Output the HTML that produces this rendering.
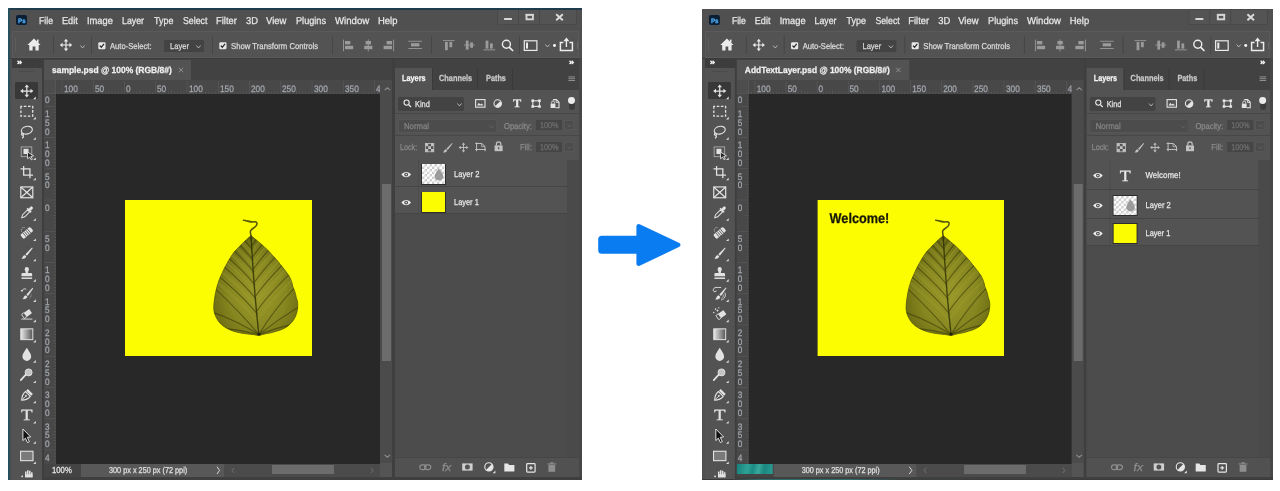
<!DOCTYPE html><html lang="en"><head><meta charset="utf-8"><title>Add text layer - before and after</title><style>
html,body{margin:0;padding:0}
body{width:1280px;height:491px;background:#fff;position:relative;overflow:hidden;font-family:"Liberation Sans",sans-serif;text-rendering:geometricPrecision}
.r,.t,.i,.clip,.win,.in{position:absolute}
.r{left:0;top:0}
.t{white-space:nowrap;transform-origin:0 50%;display:block;-webkit-text-stroke:0.25px currentColor}
.ff-s{font-family:"Liberation Serif",serif}
.i{display:block;overflow:visible}
.clip,.win{overflow:hidden}
.in{left:0;top:0;width:600px;height:491px;filter:blur(0.4px)}

</style></head><body>
<div class="win" style="left:8px;top:8px;width:574px;height:471.6px"><div class="in" style="left:-8px;top:-8px">
<div class="r" style="left:0px;top:0px;width:600px;height:491px;background:#505050;"></div><div class="r" style="left:16px;top:15px;width:11.4px;height:9.9px;background:#0a1f33;border-radius:2px;"></div><span class="t" style="left:17.9px;top:14px;font-size:6.4px;line-height:16px;color:#52acf6;font-weight:bold;transform:scaleX(0.971);">Ps</span><span class="t" style="left:39px;top:14px;font-size:10px;line-height:16px;color:#e8e8e8;transform:scaleX(0.869);">File</span><span class="t" style="left:62.3px;top:14px;font-size:10px;line-height:16px;color:#e8e8e8;transform:scaleX(0.911);">Edit</span><span class="t" style="left:87.3px;top:14px;font-size:10px;line-height:16px;color:#e8e8e8;transform:scaleX(0.932);">Image</span><span class="t" style="left:122.3px;top:14px;font-size:10px;line-height:16px;color:#e8e8e8;transform:scaleX(0.879);">Layer</span><span class="t" style="left:153.6px;top:14px;font-size:10px;line-height:16px;color:#e8e8e8;transform:scaleX(0.895);">Type</span><span class="t" style="left:182.6px;top:14px;font-size:10px;line-height:16px;color:#e8e8e8;transform:scaleX(0.878);">Select</span><span class="t" style="left:216px;top:14px;font-size:10px;line-height:16px;color:#e8e8e8;transform:scaleX(0.936);">Filter</span><span class="t" style="left:245.8px;top:14px;font-size:10px;line-height:16px;color:#e8e8e8;transform:scaleX(0.939);">3D</span><span class="t" style="left:266.4px;top:14px;font-size:10px;line-height:16px;color:#e8e8e8;transform:scaleX(0.949);">View</span><span class="t" style="left:295.8px;top:14px;font-size:10px;line-height:16px;color:#e8e8e8;transform:scaleX(0.915);">Plugins</span><span class="t" style="left:334.8px;top:14px;font-size:10px;line-height:16px;color:#e8e8e8;transform:scaleX(0.962);">Window</span><span class="t" style="left:378.4px;top:14px;font-size:10px;line-height:16px;color:#e8e8e8;transform:scaleX(0.943);">Help</span><div class="r" style="left:497.8px;top:9.6px;width:77.8px;height:14.2px;background:#545454;box-shadow:0 0 0 0.8px #494949;"></div><div class="r" style="left:518.4px;top:9.6px;width:0.9px;height:14.2px;background:#494949;"></div><div class="r" style="left:539.4px;top:9.6px;width:0.9px;height:14.2px;background:#494949;"></div><div class="r" style="left:503.6px;top:17.6px;width:8.4px;height:2.5px;background:#d6d6d6;border-radius:0.6px;"></div><svg class="i" style="left:523px;top:11px;" width="14" height="12" viewBox="0 0 14 12"><rect x="3.5" y="3.9" width="6.4" height="4.4" fill="none" stroke="#d6d6d6" stroke-width="1.9"/><rect x="2.55" y="2.9" width="8.3" height="1.4" fill="#d6d6d6"/></svg><svg class="i" style="left:553px;top:11px;" width="14" height="12" viewBox="0 0 14 12"><path d="M3.2 3.2L9.8 9.2M9.8 3.2L3.2 9.2" stroke="#dcdcdc" stroke-width="1.9"/></svg><div class="r" style="left:12px;top:31px;width:567.2px;height:26.6px;background:#535353;box-shadow:inset 0 0 0 0.8px #5d5d5d;"></div><div class="r" style="left:8px;top:57.6px;width:592px;height:1.4px;background:#3c3c3c;"></div><div class="r" style="left:14.6px;top:38px;width:1px;height:14px;background:#5e5e5e;"></div><div class="r" style="left:52.5px;top:36px;width:1px;height:18px;background:#464646;"></div><div class="r" style="left:90.9px;top:36px;width:1px;height:18px;background:#464646;"></div><div class="r" style="left:211.7px;top:36px;width:1px;height:18px;background:#464646;"></div><div class="r" style="left:331.5px;top:36px;width:1px;height:18px;background:#464646;"></div><div class="r" style="left:431.1px;top:36px;width:1px;height:18px;background:#464646;"></div><div class="r" style="left:519.1px;top:36px;width:1px;height:18px;background:#464646;"></div><svg class="i" style="left:26px;top:37px;" width="16" height="16" viewBox="0 0 16 16"><path d="M8 1.6L1.4 8H3.3V13.6H6.6V9.6H9.4V13.6H12.7V8H14.6z" fill="#ececec"/><rect x="11" y="2.6" width="1.6" height="3" fill="#ececec"/></svg><svg class="i" style="left:58px;top:37px;" width="16" height="16" viewBox="0 0 16 16"><g transform="translate(8 8) scale(0.93)"><g fill="none" stroke="#ececec" stroke-width="1.25"><path d="M0-4.2V4.2M-4.2 0H4.2"/></g><g fill="#ececec"><path d="M0-6.6L2.3-3.7H-2.3z"/><path d="M0 6.6L2.3 3.7H-2.3z"/><path d="M-6.6 0L-3.7-2.3V2.3z"/><path d="M6.6 0L3.7-2.3V2.3z"/></g></g></svg><svg class="i" style="left:80px;top:44.5px;" width="5" height="3.6" viewBox="0 0 5 3.6"><path d="M0.4 0.5L2.5 3L4.6 0.5" fill="none" stroke="#bdbdbd" stroke-width="0.9"/></svg><svg class="i" style="left:98.2px;top:41.6px;" width="8" height="8" viewBox="0 0 8 8"><rect x="0.3" y="0.3" width="7.2" height="7" rx="1.2" fill="#e8e8e8"/><path d="M1.8 3.6L3.3 5.3L6 1.9" fill="none" stroke="#2a2a2a" stroke-width="1.3"/></svg><span class="t" style="left:110.2px;top:38px;font-size:8.6px;line-height:16px;color:#dadada;transform:scaleX(0.888);">Auto-Select:</span><div class="r" style="left:164px;top:40px;width:40px;height:12.2px;background:#434343;border-radius:1.5px;"></div><span class="t" style="left:169.7px;top:38px;font-size:8.6px;line-height:16px;color:#dadada;transform:scaleX(0.879);">Layer</span><svg class="i" style="left:196.4px;top:44.8px;" width="5" height="3.6" viewBox="0 0 5 3.6"><path d="M0.4 0.5L2.5 3L4.6 0.5" fill="none" stroke="#bdbdbd" stroke-width="0.9"/></svg><svg class="i" style="left:219.4px;top:41.6px;" width="8" height="8" viewBox="0 0 8 8"><rect x="0.3" y="0.3" width="7.2" height="7" rx="1.2" fill="#e8e8e8"/><path d="M1.8 3.6L3.3 5.3L6 1.9" fill="none" stroke="#2a2a2a" stroke-width="1.3"/></svg><span class="t" style="left:231.2px;top:38px;font-size:8.6px;line-height:16px;color:#dadada;transform:scaleX(0.899);">Show Transform Controls</span><svg class="i" style="left:342px;top:39px;" width="13" height="13" viewBox="0 0 13 13"><rect x="1" y="0.6" width="0.9" height="11.6" fill="#9b9b9b"/><rect x="3" y="2" width="5.4" height="3.4" fill="#9b9b9b"/><rect x="3" y="6.8" width="8.2" height="3.4" fill="#9b9b9b"/></svg><svg class="i" style="left:362px;top:39px;" width="13" height="13" viewBox="0 0 13 13"><rect x="5.8" y="0.4" width="0.9" height="12" fill="#9b9b9b"/><rect x="3.6" y="2" width="5.4" height="3.4" fill="#9b9b9b"/><rect x="2.2" y="6.8" width="8.2" height="3.4" fill="#9b9b9b"/></svg><svg class="i" style="left:382px;top:39px;" width="13" height="13" viewBox="0 0 13 13"><rect x="11.2" y="0.6" width="0.9" height="11.6" fill="#9b9b9b"/><rect x="4.6" y="2" width="5.4" height="3.4" fill="#9b9b9b"/><rect x="1.6" y="6.8" width="8.4" height="3.4" fill="#9b9b9b"/></svg><svg class="i" style="left:408px;top:39px;" width="15" height="13" viewBox="0 0 15 13"><rect x="0.4" y="1.8" width="13.6" height="0.9" fill="#9b9b9b"/><rect x="0.4" y="9" width="13.6" height="0.9" fill="#9b9b9b"/><rect x="3" y="4.2" width="8.4" height="3.2" fill="#9b9b9b"/></svg><svg class="i" style="left:442px;top:39px;" width="14" height="13" viewBox="0 0 14 13"><rect x="1" y="1.2" width="11.6" height="0.9" fill="#9b9b9b"/><rect x="3" y="3" width="2.8" height="8.2" fill="#9b9b9b"/><rect x="7.4" y="3" width="2.8" height="5.2" fill="#9b9b9b"/></svg><svg class="i" style="left:463px;top:39px;" width="13" height="13" viewBox="0 0 13 13"><rect x="0.8" y="5.6" width="11" height="0.9" fill="#9b9b9b"/><rect x="2.8" y="1.6" width="2.8" height="9" fill="#9b9b9b"/><rect x="7.2" y="3.4" width="2.8" height="5.4" fill="#9b9b9b"/></svg><svg class="i" style="left:482px;top:39px;" width="14" height="13" viewBox="0 0 14 13"><rect x="1.4" y="10.4" width="11.8" height="0.9" fill="#9b9b9b"/><rect x="3.6" y="1.6" width="2.8" height="8" fill="#9b9b9b"/><rect x="8" y="4.4" width="2.8" height="5.2" fill="#9b9b9b"/></svg><svg class="i" style="left:500px;top:38px;" width="15" height="15" viewBox="0 0 15 15"><circle cx="6.4" cy="6.2" r="4" fill="none" stroke="#ececec" stroke-width="1.4"/><path d="M9.4 9.3L12.6 12.5" stroke="#ececec" stroke-width="1.7" stroke-linecap="round"/></svg><svg class="i" style="left:523px;top:39px;" width="16" height="13" viewBox="0 0 16 13"><rect x="1.3" y="1.8" width="12.6" height="9.6" fill="none" stroke="#ececec" stroke-width="1.2"/><rect x="3" y="3.6" width="2" height="6" fill="#ececec"/></svg><svg class="i" style="left:545px;top:44.4px;" width="5" height="3.6" viewBox="0 0 5 3.6"><path d="M0.4 0.5L2.5 3L4.6 0.5" fill="none" stroke="#bdbdbd" stroke-width="0.9"/></svg><div class="r" style="left:552.9px;top:44.3px;width:2.9px;height:2.9px;background:#f4f4f4;border-radius:50%;"></div><svg class="i" style="left:558px;top:37px;" width="17" height="15" viewBox="0 0 17 15"><path d="M5.4 5.6H2.4V13.4H14.4V5.6H11.4" fill="none" stroke="#ececec" stroke-width="1.5"/><path d="M8.4 10V2.4" stroke="#ececec" stroke-width="1.4"/><path d="M8.4 0.6L11.4 4.2H5.4z" fill="#ececec"/></svg><div class="r" style="left:576.6px;top:42px;width:1px;height:7px;background:#6a6a6a;"></div><div class="r" style="left:12px;top:59px;width:30px;height:9px;background:#3d3d3d;"></div><svg class="i" style="left:16.8px;top:60.2px;" width="6" height="6" viewBox="0 0 6 6"><path d="M0.5 0.8L2.1 2.4L0.5 4M2.7 0.8L4.3 2.4L2.7 4" fill="none" stroke="#f4f4f4" stroke-width="1.35"/></svg><div class="r" style="left:12px;top:68px;width:30px;height:412px;background:#535353;"></div><div class="r" style="left:19px;top:71px;width:15px;height:1.4px;background:#4a4a4a;"></div><div class="r" style="left:42px;top:59px;width:2px;height:421px;background:#3e3e3e;"></div><div class="r" style="left:15.3px;top:82px;width:23px;height:17.2px;background:#383838;border-radius:1.5px;"></div><svg class="i" style="left:12px;top:80px;" width="30" height="400" viewBox="12 80 30 400"><defs><linearGradient id="ggL" x1="0" x2="1"><stop offset="0" stop-color="#e8e8e8"/><stop offset="1" stop-color="#555"/></linearGradient></defs><g transform="translate(26.8 91) scale(1)"><g fill="none" stroke="#e2e2e2" stroke-width="1.25"><path d="M0-4.2V4.2M-4.2 0H4.2"/></g><g fill="#e2e2e2"><path d="M0-6.6L2.3-3.7H-2.3z"/><path d="M0 6.6L2.3 3.7H-2.3z"/><path d="M-6.6 0L-3.7-2.3V2.3z"/><path d="M6.6 0L3.7-2.3V2.3z"/></g></g><path d="M35.8 96.6v2.6h-2.6z" fill="#e2e2e2"/><g transform="translate(26.8 111.27) scale(1)"><rect x="-5.9" y="-4.9" width="11.8" height="9.8" fill="none" stroke="#e2e2e2" stroke-width="1.3" stroke-dasharray="2.6 1.6" stroke-dashoffset="1.3"/></g><path d="M35.8 116.87v2.6h-2.6z" fill="#e2e2e2"/><g transform="translate(26.8 131.54) scale(0.95)"><g fill="none" stroke="#e2e2e2" stroke-width="1.2"><ellipse cx="0.4" cy="-1.4" rx="5.9" ry="4" transform="rotate(-14)"/><path d="M-4.4 1.2c-1.6 0.6-1.6 2.6 0 2.6c1.2 0 1.2-1.6 0.2-1.4M-3.9 3.6c0.6 1.2 0.2 2.6-1 3.4"/></g></g><path d="M35.8 137.14v2.6h-2.6z" fill="#e2e2e2"/><g transform="translate(26.8 151.81) scale(1)"><rect x="-5.6" y="-4.9" width="10.6" height="9.8" fill="none" stroke="#b4b4b4" stroke-width="0.8"/><rect x="-3.3" y="-3" width="5" height="5.2" fill="#e2e2e2"/><path d="M0.6 0.2L6.8 4L4 4.6L5.6 7.4L4.4 8L2.8 5.2L0.9 7z" fill="#222" stroke="#e2e2e2" stroke-width="0.9"/></g><path d="M35.8 157.41v2.6h-2.6z" fill="#e2e2e2"/><g transform="translate(26.8 172.08) scale(0.95)"><g fill="none" stroke="#e2e2e2" stroke-width="1.35"><path d="M-3.3-6.4V3.3H6.6"/><path d="M-6.6-3.3H3.3V6.4"/></g></g><path d="M35.8 177.68v2.6h-2.6z" fill="#e2e2e2"/><g transform="translate(26.8 192.35) scale(1)"><g fill="none" stroke="#e2e2e2" stroke-width="1.2"><rect x="-6" y="-5.4" width="12" height="10.8"/><path d="M-6-5.4L6 5.4M6-5.4L-6 5.4"/></g></g><g transform="translate(26.8 212.62) scale(1)"><g transform="rotate(45)"><rect x="-1.5" y="-8" width="3" height="4.2" rx="1.2" fill="#e2e2e2"/><rect x="-2.8" y="-4.2" width="5.6" height="1.7" fill="#e2e2e2"/><path d="M-1.5-2.5V4.4L0 7.2L1.5 4.4V-2.5z" fill="none" stroke="#e2e2e2" stroke-width="1"/></g></g><path d="M35.8 218.22v2.6h-2.6z" fill="#e2e2e2"/><g transform="translate(26.8 232.89) scale(0.92)"><g transform="rotate(-40)"><rect x="-7" y="-3" width="14" height="6" rx="1.6" fill="#e2e2e2"/><g stroke="#535353" stroke-width="0.9"><path d="M-3.2-3V3M-1.1-3V3M1.1-3V3M3.2-3V3"/></g></g><path d="M-5.6-1.4a3 3 0 0 1 3.4-4.4" fill="none" stroke="#e2e2e2" stroke-width="0.8" stroke-dasharray="1 0.8"/></g><path d="M35.8 238.49v2.6h-2.6z" fill="#e2e2e2"/><g transform="translate(26.8 253.16) scale(0.8)"><path d="M6.6-7L7.4-6.2L0.2 3.2L-1.8 1.4z" fill="#e2e2e2"/><path d="M-2.6 2.2L-0.6 4.1C-1.4 6.6-4 7.4-6.8 7C-5.2 5.8-5.4 3-2.6 2.2z" fill="#e2e2e2"/></g><path d="M35.8 258.76v2.6h-2.6z" fill="#e2e2e2"/><g transform="translate(26.8 273.43) scale(0.92)"><path d="M-2.3-4.6a2.3 2.3 0 1 1 4.6 0c0 1.6-1.1 2.2-1.1 4.2H4.6a1.2 1.2 0 0 1 1.2 1.2V3H-5.8V0.8A1.2 1.2 0 0 1-4.6-0.4H-1.2c0-2-1.1-2.6-1.1-4.2z" fill="#e2e2e2"/><rect x="-5.8" y="4.4" width="11.6" height="1.6" fill="#e2e2e2"/></g><path d="M35.8 279.03v2.6h-2.6z" fill="#e2e2e2"/><g transform="translate(26.8 293.7) scale(0.84)"><path d="M6.8-7L7.6-6.2L1.4 2.6L-0.4 1z" fill="#e2e2e2"/><path d="M-1.2 1.8L0.8 3.6C0 6-2.4 6.8-5 6.4C-3.6 5.2-3.8 2.6-1.2 1.8z" fill="#e2e2e2"/><path d="M-5.6-3.4a3.2 3.2 0 0 1 5-1.8" fill="none" stroke="#e2e2e2" stroke-width="1"/><path d="M-7.2-4.4L-4.2-4.4L-5.8-1.8z" fill="#e2e2e2"/><path d="M3.2 5.2a6 6 0 0 0 2.2-5" fill="none" stroke="#e2e2e2" stroke-width="0.7" stroke-dasharray="1 0.8"/></g><path d="M35.8 299.3v2.6h-2.6z" fill="#e2e2e2"/><g transform="translate(26.8 313.97) scale(0.85)"><g transform="rotate(-35)"><rect x="-5.4" y="-3.2" width="11" height="6" rx="0.8" fill="#e2e2e2"/><rect x="-5.4" y="-3.2" width="3.6" height="6" rx="0.8" fill="#535353" stroke="#e2e2e2" stroke-width="0.9"/></g><path d="M-6.4 6H6.6" stroke="#e2e2e2" stroke-width="1.1"/></g><path d="M35.8 319.57v2.6h-2.6z" fill="#e2e2e2"/><g transform="translate(26.8 334.24) scale(1)"><rect x="-6" y="-5.4" width="12" height="10.8" fill="url(#ggL)" stroke="#e2e2e2" stroke-width="1"/></g><path d="M35.8 339.84v2.6h-2.6z" fill="#e2e2e2"/><g transform="translate(26.8 354.51) scale(1)"><path d="M0-6.8C2.2-3.4 4.4-0.8 4.4 2A4.4 4.4 0 0 1-4.4 2C-4.4-0.8-2.2-3.4 0-6.8z" fill="#e2e2e2"/></g><path d="M35.8 360.11v2.6h-2.6z" fill="#e2e2e2"/><g transform="translate(26.8 374.78) scale(1)"><circle cx="1.8" cy="-2.4" r="3.5" fill="#c4c4c4" stroke="#e2e2e2" stroke-width="0.9"/><path d="M-1-0.2L-6 5.4" stroke="#e2e2e2" stroke-width="1.7" stroke-linecap="round"/></g><path d="M35.8 380.38v2.6h-2.6z" fill="#e2e2e2"/><g transform="translate(26.8 395.05) scale(1)"><g transform="rotate(225)"><path d="M0-7.2C2.6-4.4 3.8-1.6 3.4 1.6H-3.4C-3.8-1.6-2.6-4.4 0-7.2z" fill="none" stroke="#e2e2e2" stroke-width="1.1"/><path d="M0-6.4V-2" stroke="#e2e2e2" stroke-width="0.9"/><circle cx="0" cy="-1.2" r="1" fill="#e2e2e2"/><rect x="-3.6" y="2.6" width="7.2" height="2.4" fill="#e2e2e2"/></g></g><path d="M35.8 400.65v2.6h-2.6z" fill="#e2e2e2"/><path d="M35.8 420.92v2.6h-2.6z" fill="#e2e2e2"/><g transform="translate(26.8 435.59) scale(1)"><path d="M-3.9-6.6L3.9 1.4L0.5 1.7L2.6 6.1L0.7 7L-1.4 2.6L-3.9 5z" fill="#111" stroke="#e2e2e2" stroke-width="1"/></g><path d="M35.8 441.19v2.6h-2.6z" fill="#e2e2e2"/><g transform="translate(26.8 455.86) scale(1)"><rect x="-6.2" y="-4.6" width="12.4" height="9.4" fill="#7a7a7a" stroke="#e2e2e2" stroke-width="1.1"/></g><path d="M35.8 461.46v2.6h-2.6z" fill="#e2e2e2"/><g transform="translate(26.8 476.13) scale(1)"><g transform="translate(1.2 -3)"><path d="M-2.2 4V-1.6M-0.2 4V-2.8M1.8 4V-2.4M3.8 4V-0.8" stroke="#e2e2e2" stroke-width="1.5"/><rect x="-2.9" y="1.2" width="7.4" height="3" fill="#e2e2e2"/></g></g><path d="M35.8 481.73v2.6h-2.6z" fill="#e2e2e2"/><rect x="21.4" y="475.6" width="1.6" height="1.6" fill="#e2e2e2"/></svg><span class="t ff-s" style="left:21.4px;top:403px;font-size:15.5px;line-height:26px;color:#e2e2e2;transform:scaleX(1.225);">T</span><div class="r" style="left:44px;top:59px;width:349px;height:21px;background:#424242;"></div><div class="r" style="left:44px;top:60px;width:147.2px;height:20px;background:#535353;"></div><span class="t" style="left:51.5px;top:62px;font-size:8.9px;line-height:16px;color:#f0f0f0;font-weight:bold;transform:scaleX(0.954);">sample.psd @ 100% (RGB/8#)</span><svg class="i" style="left:177.6px;top:67px;" width="6" height="6" viewBox="0 0 6 6"><path d="M0.8 0.8L5.2 5.2M5.2 0.8L0.8 5.2" stroke="#9c9c9c" stroke-width="0.8"/></svg><div class="r" style="left:44px;top:80px;width:336px;height:14px;background:#484848;"></div><div class="r" style="left:44px;top:94px;width:12.4px;height:370px;background:#484848;"></div><div class="r" style="left:44px;top:80px;width:12.4px;height:14px;background:#4d4d4d;box-shadow:inset -0.6px -0.6px 0 #5c5c5c;"></div><svg class="i" style="left:56px;top:80px;" width="324" height="14" viewBox="56 80 324 14"><rect x="61.65" y="81" width="0.7" height="13" fill="#5a5a5a"/><rect x="64.83" y="91.8" width="0.6" height="2.2" fill="#5e5e5e"/><rect x="67.95" y="91.8" width="0.6" height="2.2" fill="#5e5e5e"/><rect x="71.08" y="91.8" width="0.6" height="2.2" fill="#5e5e5e"/><rect x="74.2" y="91.8" width="0.6" height="2.2" fill="#5e5e5e"/><rect x="77.33" y="90.4" width="0.6" height="3.6" fill="#5e5e5e"/><rect x="80.45" y="91.8" width="0.6" height="2.2" fill="#5e5e5e"/><rect x="83.58" y="91.8" width="0.6" height="2.2" fill="#5e5e5e"/><rect x="86.7" y="91.8" width="0.6" height="2.2" fill="#5e5e5e"/><rect x="89.83" y="91.8" width="0.6" height="2.2" fill="#5e5e5e"/><rect x="92.9" y="81" width="0.7" height="13" fill="#5a5a5a"/><rect x="96.08" y="91.8" width="0.6" height="2.2" fill="#5e5e5e"/><rect x="99.2" y="91.8" width="0.6" height="2.2" fill="#5e5e5e"/><rect x="102.33" y="91.8" width="0.6" height="2.2" fill="#5e5e5e"/><rect x="105.45" y="91.8" width="0.6" height="2.2" fill="#5e5e5e"/><rect x="108.58" y="90.4" width="0.6" height="3.6" fill="#5e5e5e"/><rect x="111.7" y="91.8" width="0.6" height="2.2" fill="#5e5e5e"/><rect x="114.83" y="91.8" width="0.6" height="2.2" fill="#5e5e5e"/><rect x="117.95" y="91.8" width="0.6" height="2.2" fill="#5e5e5e"/><rect x="121.08" y="91.8" width="0.6" height="2.2" fill="#5e5e5e"/><rect x="124.15" y="81" width="0.7" height="13" fill="#5a5a5a"/><rect x="127.33" y="91.8" width="0.6" height="2.2" fill="#5e5e5e"/><rect x="130.45" y="91.8" width="0.6" height="2.2" fill="#5e5e5e"/><rect x="133.57" y="91.8" width="0.6" height="2.2" fill="#5e5e5e"/><rect x="136.7" y="91.8" width="0.6" height="2.2" fill="#5e5e5e"/><rect x="139.82" y="90.4" width="0.6" height="3.6" fill="#5e5e5e"/><rect x="142.95" y="91.8" width="0.6" height="2.2" fill="#5e5e5e"/><rect x="146.07" y="91.8" width="0.6" height="2.2" fill="#5e5e5e"/><rect x="149.2" y="91.8" width="0.6" height="2.2" fill="#5e5e5e"/><rect x="152.32" y="91.8" width="0.6" height="2.2" fill="#5e5e5e"/><rect x="155.4" y="81" width="0.7" height="13" fill="#5a5a5a"/><rect x="158.57" y="91.8" width="0.6" height="2.2" fill="#5e5e5e"/><rect x="161.7" y="91.8" width="0.6" height="2.2" fill="#5e5e5e"/><rect x="164.82" y="91.8" width="0.6" height="2.2" fill="#5e5e5e"/><rect x="167.95" y="91.8" width="0.6" height="2.2" fill="#5e5e5e"/><rect x="171.07" y="90.4" width="0.6" height="3.6" fill="#5e5e5e"/><rect x="174.2" y="91.8" width="0.6" height="2.2" fill="#5e5e5e"/><rect x="177.32" y="91.8" width="0.6" height="2.2" fill="#5e5e5e"/><rect x="180.45" y="91.8" width="0.6" height="2.2" fill="#5e5e5e"/><rect x="183.57" y="91.8" width="0.6" height="2.2" fill="#5e5e5e"/><rect x="186.65" y="81" width="0.7" height="13" fill="#5a5a5a"/><rect x="189.82" y="91.8" width="0.6" height="2.2" fill="#5e5e5e"/><rect x="192.95" y="91.8" width="0.6" height="2.2" fill="#5e5e5e"/><rect x="196.07" y="91.8" width="0.6" height="2.2" fill="#5e5e5e"/><rect x="199.2" y="91.8" width="0.6" height="2.2" fill="#5e5e5e"/><rect x="202.32" y="90.4" width="0.6" height="3.6" fill="#5e5e5e"/><rect x="205.45" y="91.8" width="0.6" height="2.2" fill="#5e5e5e"/><rect x="208.57" y="91.8" width="0.6" height="2.2" fill="#5e5e5e"/><rect x="211.7" y="91.8" width="0.6" height="2.2" fill="#5e5e5e"/><rect x="214.82" y="91.8" width="0.6" height="2.2" fill="#5e5e5e"/><rect x="217.9" y="81" width="0.7" height="13" fill="#5a5a5a"/><rect x="221.07" y="91.8" width="0.6" height="2.2" fill="#5e5e5e"/><rect x="224.2" y="91.8" width="0.6" height="2.2" fill="#5e5e5e"/><rect x="227.32" y="91.8" width="0.6" height="2.2" fill="#5e5e5e"/><rect x="230.45" y="91.8" width="0.6" height="2.2" fill="#5e5e5e"/><rect x="233.57" y="90.4" width="0.6" height="3.6" fill="#5e5e5e"/><rect x="236.7" y="91.8" width="0.6" height="2.2" fill="#5e5e5e"/><rect x="239.82" y="91.8" width="0.6" height="2.2" fill="#5e5e5e"/><rect x="242.95" y="91.8" width="0.6" height="2.2" fill="#5e5e5e"/><rect x="246.07" y="91.8" width="0.6" height="2.2" fill="#5e5e5e"/><rect x="249.15" y="81" width="0.7" height="13" fill="#5a5a5a"/><rect x="252.32" y="91.8" width="0.6" height="2.2" fill="#5e5e5e"/><rect x="255.45" y="91.8" width="0.6" height="2.2" fill="#5e5e5e"/><rect x="258.57" y="91.8" width="0.6" height="2.2" fill="#5e5e5e"/><rect x="261.7" y="91.8" width="0.6" height="2.2" fill="#5e5e5e"/><rect x="264.82" y="90.4" width="0.6" height="3.6" fill="#5e5e5e"/><rect x="267.95" y="91.8" width="0.6" height="2.2" fill="#5e5e5e"/><rect x="271.07" y="91.8" width="0.6" height="2.2" fill="#5e5e5e"/><rect x="274.2" y="91.8" width="0.6" height="2.2" fill="#5e5e5e"/><rect x="277.32" y="91.8" width="0.6" height="2.2" fill="#5e5e5e"/><rect x="280.4" y="81" width="0.7" height="13" fill="#5a5a5a"/><rect x="283.57" y="91.8" width="0.6" height="2.2" fill="#5e5e5e"/><rect x="286.7" y="91.8" width="0.6" height="2.2" fill="#5e5e5e"/><rect x="289.82" y="91.8" width="0.6" height="2.2" fill="#5e5e5e"/><rect x="292.95" y="91.8" width="0.6" height="2.2" fill="#5e5e5e"/><rect x="296.07" y="90.4" width="0.6" height="3.6" fill="#5e5e5e"/><rect x="299.2" y="91.8" width="0.6" height="2.2" fill="#5e5e5e"/><rect x="302.32" y="91.8" width="0.6" height="2.2" fill="#5e5e5e"/><rect x="305.45" y="91.8" width="0.6" height="2.2" fill="#5e5e5e"/><rect x="308.57" y="91.8" width="0.6" height="2.2" fill="#5e5e5e"/><rect x="311.65" y="81" width="0.7" height="13" fill="#5a5a5a"/><rect x="314.82" y="91.8" width="0.6" height="2.2" fill="#5e5e5e"/><rect x="317.95" y="91.8" width="0.6" height="2.2" fill="#5e5e5e"/><rect x="321.07" y="91.8" width="0.6" height="2.2" fill="#5e5e5e"/><rect x="324.2" y="91.8" width="0.6" height="2.2" fill="#5e5e5e"/><rect x="327.32" y="90.4" width="0.6" height="3.6" fill="#5e5e5e"/><rect x="330.45" y="91.8" width="0.6" height="2.2" fill="#5e5e5e"/><rect x="333.57" y="91.8" width="0.6" height="2.2" fill="#5e5e5e"/><rect x="336.7" y="91.8" width="0.6" height="2.2" fill="#5e5e5e"/><rect x="339.82" y="91.8" width="0.6" height="2.2" fill="#5e5e5e"/><rect x="342.9" y="81" width="0.7" height="13" fill="#5a5a5a"/><rect x="346.07" y="91.8" width="0.6" height="2.2" fill="#5e5e5e"/><rect x="349.2" y="91.8" width="0.6" height="2.2" fill="#5e5e5e"/><rect x="352.32" y="91.8" width="0.6" height="2.2" fill="#5e5e5e"/><rect x="355.45" y="91.8" width="0.6" height="2.2" fill="#5e5e5e"/><rect x="358.57" y="90.4" width="0.6" height="3.6" fill="#5e5e5e"/><rect x="361.7" y="91.8" width="0.6" height="2.2" fill="#5e5e5e"/><rect x="364.82" y="91.8" width="0.6" height="2.2" fill="#5e5e5e"/><rect x="367.95" y="91.8" width="0.6" height="2.2" fill="#5e5e5e"/><rect x="371.07" y="91.8" width="0.6" height="2.2" fill="#5e5e5e"/><rect x="374.15" y="81" width="0.7" height="13" fill="#5a5a5a"/><rect x="377.32" y="91.8" width="0.6" height="2.2" fill="#5e5e5e"/><rect x="58.58" y="91.8" width="0.6" height="2.2" fill="#646464"/><rect x="55.45" y="91.8" width="0.6" height="2.2" fill="#646464"/></svg><span class="t" style="left:63.6px;top:81px;font-size:9.4px;line-height:16px;color:#a4a8ae;transform:scaleX(0.880);">100</span><span class="t" style="left:94.85px;top:81px;font-size:9.4px;line-height:16px;color:#a4a8ae;transform:scaleX(0.880);">50</span><span class="t" style="left:126.1px;top:81px;font-size:9.4px;line-height:16px;color:#a4a8ae;transform:scaleX(0.880);">0</span><span class="t" style="left:157.35px;top:81px;font-size:9.4px;line-height:16px;color:#a4a8ae;transform:scaleX(0.880);">50</span><span class="t" style="left:188.6px;top:81px;font-size:9.4px;line-height:16px;color:#a4a8ae;transform:scaleX(0.880);">100</span><span class="t" style="left:219.85px;top:81px;font-size:9.4px;line-height:16px;color:#a4a8ae;transform:scaleX(0.880);">150</span><span class="t" style="left:251.1px;top:81px;font-size:9.4px;line-height:16px;color:#a4a8ae;transform:scaleX(0.880);">200</span><span class="t" style="left:282.35px;top:81px;font-size:9.4px;line-height:16px;color:#a4a8ae;transform:scaleX(0.880);">250</span><span class="t" style="left:313.6px;top:81px;font-size:9.4px;line-height:16px;color:#a4a8ae;transform:scaleX(0.880);">300</span><span class="t" style="left:344.85px;top:81px;font-size:9.4px;line-height:16px;color:#a4a8ae;transform:scaleX(0.880);">350</span><span class="t" style="left:376.1px;top:81px;font-size:9.4px;line-height:16px;color:#a4a8ae;transform:scaleX(0.880);">4</span><svg class="i" style="left:44px;top:94px;" width="12" height="370" viewBox="44 94 12 370"><rect x="54" y="96.58" width="2" height="0.6" fill="#5c5c5c"/><rect x="54" y="99.7" width="2" height="0.6" fill="#5c5c5c"/><rect x="54" y="102.83" width="2" height="0.6" fill="#5c5c5c"/><rect x="44.6" y="105.9" width="11.4" height="0.7" fill="#5a5a5a"/><rect x="54" y="109.08" width="2" height="0.6" fill="#5c5c5c"/><rect x="54" y="112.2" width="2" height="0.6" fill="#5c5c5c"/><rect x="54" y="115.33" width="2" height="0.6" fill="#5c5c5c"/><rect x="54" y="118.45" width="2" height="0.6" fill="#5c5c5c"/><rect x="52.6" y="121.58" width="3.4" height="0.6" fill="#5c5c5c"/><rect x="54" y="124.7" width="2" height="0.6" fill="#5c5c5c"/><rect x="54" y="127.83" width="2" height="0.6" fill="#5c5c5c"/><rect x="54" y="130.95" width="2" height="0.6" fill="#5c5c5c"/><rect x="54" y="134.07" width="2" height="0.6" fill="#5c5c5c"/><rect x="44.6" y="137.15" width="11.4" height="0.7" fill="#5a5a5a"/><rect x="54" y="140.32" width="2" height="0.6" fill="#5c5c5c"/><rect x="54" y="143.45" width="2" height="0.6" fill="#5c5c5c"/><rect x="54" y="146.57" width="2" height="0.6" fill="#5c5c5c"/><rect x="54" y="149.7" width="2" height="0.6" fill="#5c5c5c"/><rect x="52.6" y="152.82" width="3.4" height="0.6" fill="#5c5c5c"/><rect x="54" y="155.95" width="2" height="0.6" fill="#5c5c5c"/><rect x="54" y="159.07" width="2" height="0.6" fill="#5c5c5c"/><rect x="54" y="162.2" width="2" height="0.6" fill="#5c5c5c"/><rect x="54" y="165.32" width="2" height="0.6" fill="#5c5c5c"/><rect x="44.6" y="168.4" width="11.4" height="0.7" fill="#5a5a5a"/><rect x="54" y="171.57" width="2" height="0.6" fill="#5c5c5c"/><rect x="54" y="174.7" width="2" height="0.6" fill="#5c5c5c"/><rect x="54" y="177.82" width="2" height="0.6" fill="#5c5c5c"/><rect x="54" y="180.95" width="2" height="0.6" fill="#5c5c5c"/><rect x="52.6" y="184.07" width="3.4" height="0.6" fill="#5c5c5c"/><rect x="54" y="187.2" width="2" height="0.6" fill="#5c5c5c"/><rect x="54" y="190.32" width="2" height="0.6" fill="#5c5c5c"/><rect x="54" y="193.45" width="2" height="0.6" fill="#5c5c5c"/><rect x="54" y="196.57" width="2" height="0.6" fill="#5c5c5c"/><rect x="44.6" y="199.65" width="11.4" height="0.7" fill="#5a5a5a"/><rect x="54" y="202.82" width="2" height="0.6" fill="#5c5c5c"/><rect x="54" y="205.95" width="2" height="0.6" fill="#5c5c5c"/><rect x="54" y="209.07" width="2" height="0.6" fill="#5c5c5c"/><rect x="54" y="212.2" width="2" height="0.6" fill="#5c5c5c"/><rect x="52.6" y="215.32" width="3.4" height="0.6" fill="#5c5c5c"/><rect x="54" y="218.45" width="2" height="0.6" fill="#5c5c5c"/><rect x="54" y="221.57" width="2" height="0.6" fill="#5c5c5c"/><rect x="54" y="224.7" width="2" height="0.6" fill="#5c5c5c"/><rect x="54" y="227.82" width="2" height="0.6" fill="#5c5c5c"/><rect x="44.6" y="230.9" width="11.4" height="0.7" fill="#5a5a5a"/><rect x="54" y="234.07" width="2" height="0.6" fill="#5c5c5c"/><rect x="54" y="237.2" width="2" height="0.6" fill="#5c5c5c"/><rect x="54" y="240.32" width="2" height="0.6" fill="#5c5c5c"/><rect x="54" y="243.45" width="2" height="0.6" fill="#5c5c5c"/><rect x="52.6" y="246.57" width="3.4" height="0.6" fill="#5c5c5c"/><rect x="54" y="249.7" width="2" height="0.6" fill="#5c5c5c"/><rect x="54" y="252.82" width="2" height="0.6" fill="#5c5c5c"/><rect x="54" y="255.95" width="2" height="0.6" fill="#5c5c5c"/><rect x="54" y="259.07" width="2" height="0.6" fill="#5c5c5c"/><rect x="44.6" y="262.15" width="11.4" height="0.7" fill="#5a5a5a"/><rect x="54" y="265.32" width="2" height="0.6" fill="#5c5c5c"/><rect x="54" y="268.45" width="2" height="0.6" fill="#5c5c5c"/><rect x="54" y="271.57" width="2" height="0.6" fill="#5c5c5c"/><rect x="54" y="274.7" width="2" height="0.6" fill="#5c5c5c"/><rect x="52.6" y="277.82" width="3.4" height="0.6" fill="#5c5c5c"/><rect x="54" y="280.95" width="2" height="0.6" fill="#5c5c5c"/><rect x="54" y="284.07" width="2" height="0.6" fill="#5c5c5c"/><rect x="54" y="287.2" width="2" height="0.6" fill="#5c5c5c"/><rect x="54" y="290.32" width="2" height="0.6" fill="#5c5c5c"/><rect x="44.6" y="293.4" width="11.4" height="0.7" fill="#5a5a5a"/><rect x="54" y="296.57" width="2" height="0.6" fill="#5c5c5c"/><rect x="54" y="299.7" width="2" height="0.6" fill="#5c5c5c"/><rect x="54" y="302.82" width="2" height="0.6" fill="#5c5c5c"/><rect x="54" y="305.95" width="2" height="0.6" fill="#5c5c5c"/><rect x="52.6" y="309.07" width="3.4" height="0.6" fill="#5c5c5c"/><rect x="54" y="312.2" width="2" height="0.6" fill="#5c5c5c"/><rect x="54" y="315.32" width="2" height="0.6" fill="#5c5c5c"/><rect x="54" y="318.45" width="2" height="0.6" fill="#5c5c5c"/><rect x="54" y="321.57" width="2" height="0.6" fill="#5c5c5c"/><rect x="44.6" y="324.65" width="11.4" height="0.7" fill="#5a5a5a"/><rect x="54" y="327.82" width="2" height="0.6" fill="#5c5c5c"/><rect x="54" y="330.95" width="2" height="0.6" fill="#5c5c5c"/><rect x="54" y="334.07" width="2" height="0.6" fill="#5c5c5c"/><rect x="54" y="337.2" width="2" height="0.6" fill="#5c5c5c"/><rect x="52.6" y="340.32" width="3.4" height="0.6" fill="#5c5c5c"/><rect x="54" y="343.45" width="2" height="0.6" fill="#5c5c5c"/><rect x="54" y="346.57" width="2" height="0.6" fill="#5c5c5c"/><rect x="54" y="349.7" width="2" height="0.6" fill="#5c5c5c"/><rect x="54" y="352.82" width="2" height="0.6" fill="#5c5c5c"/><rect x="44.6" y="355.9" width="11.4" height="0.7" fill="#5a5a5a"/><rect x="54" y="359.07" width="2" height="0.6" fill="#5c5c5c"/><rect x="54" y="362.2" width="2" height="0.6" fill="#5c5c5c"/><rect x="54" y="365.32" width="2" height="0.6" fill="#5c5c5c"/><rect x="54" y="368.45" width="2" height="0.6" fill="#5c5c5c"/><rect x="52.6" y="371.57" width="3.4" height="0.6" fill="#5c5c5c"/><rect x="54" y="374.7" width="2" height="0.6" fill="#5c5c5c"/><rect x="54" y="377.82" width="2" height="0.6" fill="#5c5c5c"/><rect x="54" y="380.95" width="2" height="0.6" fill="#5c5c5c"/><rect x="54" y="384.07" width="2" height="0.6" fill="#5c5c5c"/><rect x="44.6" y="387.15" width="11.4" height="0.7" fill="#5a5a5a"/><rect x="54" y="390.32" width="2" height="0.6" fill="#5c5c5c"/><rect x="54" y="393.45" width="2" height="0.6" fill="#5c5c5c"/><rect x="54" y="396.57" width="2" height="0.6" fill="#5c5c5c"/><rect x="54" y="399.7" width="2" height="0.6" fill="#5c5c5c"/><rect x="52.6" y="402.82" width="3.4" height="0.6" fill="#5c5c5c"/><rect x="54" y="405.95" width="2" height="0.6" fill="#5c5c5c"/><rect x="54" y="409.07" width="2" height="0.6" fill="#5c5c5c"/><rect x="54" y="412.2" width="2" height="0.6" fill="#5c5c5c"/><rect x="54" y="415.32" width="2" height="0.6" fill="#5c5c5c"/><rect x="44.6" y="418.4" width="11.4" height="0.7" fill="#5a5a5a"/><rect x="54" y="421.57" width="2" height="0.6" fill="#5c5c5c"/><rect x="54" y="424.7" width="2" height="0.6" fill="#5c5c5c"/><rect x="54" y="427.82" width="2" height="0.6" fill="#5c5c5c"/><rect x="54" y="430.95" width="2" height="0.6" fill="#5c5c5c"/><rect x="52.6" y="434.07" width="3.4" height="0.6" fill="#5c5c5c"/><rect x="54" y="437.2" width="2" height="0.6" fill="#5c5c5c"/><rect x="54" y="440.32" width="2" height="0.6" fill="#5c5c5c"/><rect x="54" y="443.45" width="2" height="0.6" fill="#5c5c5c"/><rect x="54" y="446.57" width="2" height="0.6" fill="#5c5c5c"/><rect x="44.6" y="449.65" width="11.4" height="0.7" fill="#5a5a5a"/><rect x="54" y="452.82" width="2" height="0.6" fill="#5c5c5c"/><rect x="54" y="455.95" width="2" height="0.6" fill="#5c5c5c"/><rect x="54" y="459.07" width="2" height="0.6" fill="#5c5c5c"/><rect x="54" y="462.2" width="2" height="0.6" fill="#5c5c5c"/></svg><div class="clip" style="left:44px;top:94px;width:12px;height:370px"><div class="r" style="left:-44px;top:-94px"><span class="t" style="left:45.3px;top:92px;font-size:9.4px;line-height:16px;color:#a4a8ae;transform:scaleX(0.880);">0</span><span class="t" style="left:45.3px;top:106px;font-size:9.4px;line-height:16px;color:#a4a8ae;transform:scaleX(0.880);">1</span><span class="t" style="left:45.3px;top:115px;font-size:9.4px;line-height:16px;color:#a4a8ae;transform:scaleX(0.880);">5</span><span class="t" style="left:45.3px;top:124px;font-size:9.4px;line-height:16px;color:#a4a8ae;transform:scaleX(0.880);">0</span><span class="t" style="left:45.3px;top:137px;font-size:9.4px;line-height:16px;color:#a4a8ae;transform:scaleX(0.880);">1</span><span class="t" style="left:45.3px;top:146px;font-size:9.4px;line-height:16px;color:#a4a8ae;transform:scaleX(0.880);">0</span><span class="t" style="left:45.3px;top:155px;font-size:9.4px;line-height:16px;color:#a4a8ae;transform:scaleX(0.880);">0</span><span class="t" style="left:45.3px;top:169px;font-size:9.4px;line-height:16px;color:#a4a8ae;transform:scaleX(0.880);">5</span><span class="t" style="left:45.3px;top:177px;font-size:9.4px;line-height:16px;color:#a4a8ae;transform:scaleX(0.880);">0</span><span class="t" style="left:45.3px;top:200px;font-size:9.4px;line-height:16px;color:#a4a8ae;transform:scaleX(0.880);">0</span><span class="t" style="left:45.3px;top:231px;font-size:9.4px;line-height:16px;color:#a4a8ae;transform:scaleX(0.880);">5</span><span class="t" style="left:45.3px;top:240px;font-size:9.4px;line-height:16px;color:#a4a8ae;transform:scaleX(0.880);">0</span><span class="t" style="left:45.3px;top:262px;font-size:9.4px;line-height:16px;color:#a4a8ae;transform:scaleX(0.880);">1</span><span class="t" style="left:45.3px;top:271px;font-size:9.4px;line-height:16px;color:#a4a8ae;transform:scaleX(0.880);">0</span><span class="t" style="left:45.3px;top:280px;font-size:9.4px;line-height:16px;color:#a4a8ae;transform:scaleX(0.880);">0</span><span class="t" style="left:45.3px;top:294px;font-size:9.4px;line-height:16px;color:#a4a8ae;transform:scaleX(0.880);">1</span><span class="t" style="left:45.3px;top:302px;font-size:9.4px;line-height:16px;color:#a4a8ae;transform:scaleX(0.880);">5</span><span class="t" style="left:45.3px;top:311px;font-size:9.4px;line-height:16px;color:#a4a8ae;transform:scaleX(0.880);">0</span><span class="t" style="left:45.3px;top:325px;font-size:9.4px;line-height:16px;color:#a4a8ae;transform:scaleX(0.880);">2</span><span class="t" style="left:45.3px;top:334px;font-size:9.4px;line-height:16px;color:#a4a8ae;transform:scaleX(0.880);">0</span><span class="t" style="left:45.3px;top:342px;font-size:9.4px;line-height:16px;color:#a4a8ae;transform:scaleX(0.880);">0</span><span class="t" style="left:45.3px;top:356px;font-size:9.4px;line-height:16px;color:#a4a8ae;transform:scaleX(0.880);">2</span><span class="t" style="left:45.3px;top:365px;font-size:9.4px;line-height:16px;color:#a4a8ae;transform:scaleX(0.880);">5</span><span class="t" style="left:45.3px;top:374px;font-size:9.4px;line-height:16px;color:#a4a8ae;transform:scaleX(0.880);">0</span><span class="t" style="left:45.3px;top:387px;font-size:9.4px;line-height:16px;color:#a4a8ae;transform:scaleX(0.880);">3</span><span class="t" style="left:45.3px;top:396px;font-size:9.4px;line-height:16px;color:#a4a8ae;transform:scaleX(0.880);">0</span><span class="t" style="left:45.3px;top:405px;font-size:9.4px;line-height:16px;color:#a4a8ae;transform:scaleX(0.880);">0</span><span class="t" style="left:45.3px;top:419px;font-size:9.4px;line-height:16px;color:#a4a8ae;transform:scaleX(0.880);">3</span><span class="t" style="left:45.3px;top:427px;font-size:9.4px;line-height:16px;color:#a4a8ae;transform:scaleX(0.880);">5</span><span class="t" style="left:45.3px;top:436px;font-size:9.4px;line-height:16px;color:#a4a8ae;transform:scaleX(0.880);">0</span><span class="t" style="left:45.3px;top:450px;font-size:9.4px;line-height:16px;color:#a4a8ae;transform:scaleX(0.880);">4</span></div></div><div class="r" style="left:56.4px;top:94px;width:323.6px;height:370px;background:#282828;"></div><div class="r" style="left:124.5px;top:200px;width:187.7px;height:156.4px;background:#fdfd02;"></div><svg class="i" style="left:208px;top:214px;" width="96" height="128" viewBox="208 214 96 128"><defs><radialGradient id="lgL" cx="0.52" cy="0.6" r="0.62"><stop offset="0" stop-color="#98982a"/><stop offset="0.55" stop-color="#868620"/><stop offset="0.88" stop-color="#6c6c14"/><stop offset="1" stop-color="#54540c"/></radialGradient>
<clipPath id="lcL"><path d="M251 235.6C254.6 238.6 258.4 241.8 262 244.8C265.6 248 269 251.2 272 254.8C275.2 258 278 261.2 280.6 264.8C283.8 268.6 286.8 272.4 289.2 276.2C291 279.6 292.2 283 292.7 286.3C294.4 290 295.6 293.8 296.3 297.7C297.4 300.4 297.9 303.2 297.7 306.2C297.6 310.2 296.6 314 294.9 317.6C293.2 321 290.8 323.8 287.7 326.2C284.2 328.6 280.4 330.2 276.3 331.2C273 332.4 269.8 333.2 266.3 333.6C263.8 334.2 261.4 334.8 258.9 335.6C255.2 334.8 251.6 334.3 247.8 334C243.8 333.6 240 333 236.4 332C231.6 330.8 227.2 328.8 223.5 326.2C220.8 324.2 218.6 321.8 217.1 319C215.2 316 214.1 312.6 213.8 309C213.7 306 213.9 303.2 214.3 300.5C214.9 295.6 215.8 290.8 217.1 286.3C218.2 282.2 219.6 278.4 221.4 274.8C223.2 270.4 225.4 266 227.8 262C229.8 258.4 231.9 255 234.2 252C239.6 246 245.4 240.6 251 235.6z"/></clipPath>
<filter id="lbL" x="-10%" y="-10%" width="120%" height="120%"><feGaussianBlur stdDeviation="0.5"/></filter></defs>
<g filter="url(#lbL)">
<path d="M251 235.6C254.6 238.6 258.4 241.8 262 244.8C265.6 248 269 251.2 272 254.8C275.2 258 278 261.2 280.6 264.8C283.8 268.6 286.8 272.4 289.2 276.2C291 279.6 292.2 283 292.7 286.3C294.4 290 295.6 293.8 296.3 297.7C297.4 300.4 297.9 303.2 297.7 306.2C297.6 310.2 296.6 314 294.9 317.6C293.2 321 290.8 323.8 287.7 326.2C284.2 328.6 280.4 330.2 276.3 331.2C273 332.4 269.8 333.2 266.3 333.6C263.8 334.2 261.4 334.8 258.9 335.6C255.2 334.8 251.6 334.3 247.8 334C243.8 333.6 240 333 236.4 332C231.6 330.8 227.2 328.8 223.5 326.2C220.8 324.2 218.6 321.8 217.1 319C215.2 316 214.1 312.6 213.8 309C213.7 306 213.9 303.2 214.3 300.5C214.9 295.6 215.8 290.8 217.1 286.3C218.2 282.2 219.6 278.4 221.4 274.8C223.2 270.4 225.4 266 227.8 262C229.8 258.4 231.9 255 234.2 252C239.6 246 245.4 240.6 251 235.6z" fill="url(#lgL)" stroke="#55550c" stroke-width="0.8"/>
<g clip-path="url(#lcL)" fill="none">
<path d="M251.64 244q-14 -18 -46 -44 M251.64 242q13 -19 44 -48 M251.95 248q-14 -18 -46 -44 M251.95 246q13 -19 44 -48 M252.27 252q-14 -18 -46 -44 M252.27 250q13 -19 44 -48 M252.59 256q-14 -18 -46 -44 M252.59 254q13 -19 44 -48 M252.91 260q-14 -18 -46 -44 M252.91 258q13 -19 44 -48 M253.23 264q-14 -18 -46 -44 M253.23 262q13 -19 44 -48 M253.54 268q-14 -18 -46 -44 M253.54 266q13 -19 44 -48 M253.86 272q-14 -18 -46 -44 M253.86 270q13 -19 44 -48 M254.18 276q-14 -18 -46 -44 M254.18 274q13 -19 44 -48 M254.5 280q-14 -18 -46 -44 M254.5 278q13 -19 44 -48 M254.82 284q-14 -18 -46 -44 M254.82 282q13 -19 44 -48 M255.13 288q-14 -18 -46 -44 M255.13 286q13 -19 44 -48 M255.45 292q-14 -18 -46 -44 M255.45 290q13 -19 44 -48 M255.77 296q-14 -18 -46 -44 M255.77 294q13 -19 44 -48 M256.09 300q-14 -18 -46 -44 M256.09 298q13 -19 44 -48 M256.41 304q-14 -18 -46 -44 M256.41 302q13 -19 44 -48 M256.72 308q-14 -18 -46 -44 M256.72 306q13 -19 44 -48 M257.04 312q-14 -18 -46 -44 M257.04 310q13 -19 44 -48 M257.36 316q-14 -18 -46 -44 M257.36 314q13 -19 44 -48 M257.68 320q-14 -18 -46 -44 M257.68 318q13 -19 44 -48 M258 324q-14 -18 -46 -44 M258 322q13 -19 44 -48 M258.31 328q-14 -18 -46 -44 M258.31 326q13 -19 44 -48 M258.63 332q-14 -18 -46 -44 M258.63 330q13 -19 44 -48" stroke="#9a9a30" stroke-width="0.8" opacity="0.5"/>
<path d="M252.47 254.5q-14 -18 -46 -44 M253.38 266q-14 -18 -46 -44 M254.38 278.5q-14 -18 -46 -44 M255.45 292q-14 -18 -46 -44 M256.6 306.5q-14 -18 -46 -44 M257.84 322q-14 -18 -46 -44 M252.23 251.5q13 -19 44 -48 M253.15 263q13 -19 44 -48 M254.14 275.5q13 -19 44 -48 M255.21 289q13 -19 44 -48 M256.37 303.5q13 -19 44 -48 M257.6 319q13 -19 44 -48" stroke="#a0a034" stroke-width="2.2" opacity="0.28"/>
<path d="M252.03 249q-14 -18 -46 -44 M252.91 260q-14 -18 -46 -44 M253.86 272q-14 -18 -46 -44 M254.9 285q-14 -18 -46 -44 M256.01 299q-14 -18 -46 -44 M257.2 314q-14 -18 -46 -44 M251.79 246q13 -19 44 -48 M252.67 257q13 -19 44 -48 M253.62 269q13 -19 44 -48 M254.66 282q13 -19 44 -48 M255.77 296q13 -19 44 -48 M256.96 311q13 -19 44 -48 M258.9 334.6q-18 -22 -44 -46 M258.9 334.6q-22 -14 -48 -23 M258.9 334.6q-20 -5 -40 -7 M258.9 334.6q14 -24 36 -47 M258.9 334.6q20 -16 42 -29 M258.9 334.6q18 -7 36 -11" stroke="#2e2e05" stroke-width="1.15" opacity="0.52"/>
<path d="M251 235.6C252.4 262 255 300 258.9 335" stroke="#2c2c05" stroke-width="1.4" opacity="0.78"/>
<circle cx="258.9" cy="334.4" r="1.7" fill="#24240a"/>
</g>
<path d="M243.5 220.3C247 220.6 251 222.6 254.2 221.8C256.8 221.4 257.6 223.2 256.4 225.4C255 227.8 251.8 228.6 250.6 230.6C250 232 250.6 234 251 235.8" fill="none" stroke="#58580a" stroke-width="1.6" stroke-linecap="round"/>
</g></svg><div class="r" style="left:380px;top:80px;width:12.4px;height:400px;background:#4b4b4b;"></div><div class="r" style="left:381.6px;top:183.5px;width:9.8px;height:177.3px;background:#6c6c6c;"></div><svg class="i" style="left:384px;top:87px;" width="7" height="4" viewBox="0 0 7 4"><path d="M0.6 3.2L3.4 0.8L6.2 3.2" fill="none" stroke="#8c8c8c" stroke-width="1.1"/></svg><svg class="i" style="left:384px;top:453.6px;" width="7" height="4" viewBox="0 0 7 4"><path d="M0.6 0.8L3.4 3.2L6.2 0.8" fill="none" stroke="#8c8c8c" stroke-width="1.1"/></svg><div class="r" style="left:380px;top:463px;width:12.4px;height:13.6px;background:#545454;"></div><div class="r" style="left:44px;top:464px;width:336px;height:16px;background:#4b4b4b;"></div><div class="r" style="left:44px;top:464px;width:37px;height:16px;background:#444444;"></div><div class="r" style="left:81px;top:464px;width:142.6px;height:16px;background:#585858;"></div><span class="t" style="left:52.2px;top:462px;font-size:8.8px;line-height:16px;color:#e8e8e8;transform:scaleX(0.880);">100%</span><span class="t" style="left:108.8px;top:462px;font-size:8.6px;line-height:16px;color:#e0e0e0;transform:scaleX(0.848);">300 px x 250 px (72 ppi)</span><svg class="i" style="left:215.6px;top:466px;" width="5" height="9" viewBox="0 0 5 9"><path d="M1 0.8L3.6 4.4L1 8" fill="none" stroke="#d8d8d8" stroke-width="1"/></svg><svg class="i" style="left:230.6px;top:467px;" width="4" height="7" viewBox="0 0 4 7"><path d="M3 0.8L1 3.4L3 6" fill="none" stroke="#747474" stroke-width="0.9"/></svg><svg class="i" style="left:370.4px;top:467px;" width="4" height="7" viewBox="0 0 4 7"><path d="M1 0.8L3 3.4L1 6" fill="none" stroke="#747474" stroke-width="0.9"/></svg><div class="r" style="left:272px;top:465.4px;width:61.8px;height:8.8px;background:#6c6c6c;"></div><div class="r" style="left:44px;top:476.6px;width:349px;height:14.4px;background:#3f3f3f;"></div><div class="r" style="left:392.4px;top:59px;width:2.9px;height:421px;background:#3f3f3f;"></div><div class="r" style="left:395.3px;top:59px;width:183.3px;height:30.6px;background:#424242;"></div><svg class="i" style="left:569px;top:60.4px;" width="6" height="6" viewBox="0 0 6 6"><path d="M0.5 0.8L2.1 2.4L0.5 4M2.7 0.8L4.3 2.4L2.7 4" fill="none" stroke="#f4f4f4" stroke-width="1.35"/></svg><div class="r" style="left:395.3px;top:67.8px;width:36.7px;height:21.8px;background:#535353;"></div><div class="r" style="left:432px;top:67.8px;width:1px;height:21.8px;background:#3a3a3a;"></div><div class="r" style="left:477px;top:67.8px;width:1px;height:21.8px;background:#3a3a3a;"></div><div class="r" style="left:512px;top:67.8px;width:1px;height:21.8px;background:#3a3a3a;"></div><span class="t" style="left:402px;top:70px;font-size:8.9px;line-height:16px;color:#f4f4f4;font-weight:bold;transform:scaleX(0.822);">Layers</span><span class="t" style="left:438.8px;top:70px;font-size:8.9px;line-height:16px;color:#c9c9c9;font-weight:bold;transform:scaleX(0.829);">Channels</span><span class="t" style="left:485.8px;top:70px;font-size:8.9px;line-height:16px;color:#c9c9c9;font-weight:bold;transform:scaleX(0.825);">Paths</span><svg class="i" style="left:568px;top:75.6px;" width="8" height="6" viewBox="0 0 8 6"><path d="M0.4 0.9H7M0.4 2.7H7M0.4 4.5H7" stroke="#8f8f8f" stroke-width="1"/></svg><div class="r" style="left:395.3px;top:89.6px;width:183.3px;height:387px;background:#535353;"></div><div class="r" style="left:578.6px;top:58.4px;width:21.4px;height:432.6px;background:#474747;"></div><div class="r" style="left:392.4px;top:476.6px;width:207.6px;height:14.4px;background:#3f3f3f;"></div><div class="r" style="left:398.3px;top:97.2px;width:65.9px;height:13.4px;background:#434343;border-radius:1.5px;"></div><svg class="i" style="left:403.4px;top:99.4px;" width="9" height="9" viewBox="0 0 9 9"><circle cx="3.6" cy="3.6" r="2.6" fill="none" stroke="#e8e8e8" stroke-width="1.1"/><path d="M5.6 5.6L8 8" stroke="#e8e8e8" stroke-width="1.3"/></svg><span class="t" style="left:414.8px;top:96px;font-size:8.6px;line-height:16px;color:#e2e2e2;transform:scaleX(0.860);">Kind</span><svg class="i" style="left:457.3px;top:103.2px;" width="5" height="3.6" viewBox="0 0 5 3.6"><path d="M0.4 0.5L2.5 3L4.6 0.5" fill="none" stroke="#bdbdbd" stroke-width="0.9"/></svg><svg class="i" style="left:474.6px;top:99px;" width="11" height="9" viewBox="0 0 11 9"><rect x="0.6" y="0.6" width="9.4" height="7.6" fill="none" stroke="#e4e4e4" stroke-width="1.1"/><path d="M2 6.6L3.8 3.8L5.2 5.6L6.6 4.4L8.6 6.6z" fill="#e4e4e4"/></svg><svg class="i" style="left:493.4px;top:99px;" width="10" height="9" viewBox="0 0 10 9"><circle cx="4.7" cy="4.5" r="3.7" fill="none" stroke="#e4e4e4" stroke-width="1.1"/><path d="M7.4 1.9A3.7 3.7 0 0 1 2 7.2z" fill="#e4e4e4"/></svg><span class="t ff-s" style="left:512.8px;top:96px;font-size:11.5px;line-height:16px;color:#e8e8e8;font-weight:bold;transform:scaleX(1.069);">T</span><svg class="i" style="left:530.6px;top:99px;" width="11" height="9.6" viewBox="0 0 11 9.6"><rect x="1.8" y="1.8" width="6.6" height="5.6" fill="none" stroke="#e4e4e4" stroke-width="1.1"/><g fill="#e4e4e4"><rect x="0.4" y="0.4" width="2.6" height="2.6"/><rect x="7.2" y="0.4" width="2.6" height="2.6"/><rect x="0.4" y="6.2" width="2.6" height="2.6"/><rect x="7.2" y="6.2" width="2.6" height="2.6"/></g></svg><svg class="i" style="left:550.2px;top:98.6px;" width="10" height="10" viewBox="0 0 10 10"><path d="M3 0.6H6.4L9 3.2V8.8H5.4" fill="none" stroke="#e4e4e4" stroke-width="1.1"/><path d="M6.2 0.8V3.4H8.8" fill="none" stroke="#e4e4e4" stroke-width="0.9"/><rect x="0.6" y="4.6" width="4.8" height="4.4" fill="#e4e4e4"/><path d="M1.6 4.6V3.4a1.4 1.4 0 0 1 2.8 0V4.6" fill="none" stroke="#e4e4e4" stroke-width="0.9"/></svg><div class="r" style="left:569px;top:98px;width:5.6px;height:11.6px;background:#3c3c3c;border-radius:3px;"></div><div class="r" style="left:568.4px;top:96.8px;width:6.8px;height:6.8px;background:#ececec;border-radius:50%;"></div><div class="r" style="left:395.3px;top:113.2px;width:183.3px;height:1px;background:#474747;"></div><div class="r" style="left:398.3px;top:119px;width:98.5px;height:13.6px;background:#4c4c4c;box-shadow:inset 0 0 0 0.7px #5a5a5a;border-radius:1.5px;"></div><span class="t" style="left:404px;top:118px;font-size:8.6px;line-height:16px;color:#858585;transform:scaleX(0.902);">Normal</span><svg class="i" style="left:489px;top:125px;" width="5" height="3.6" viewBox="0 0 5 3.6"><path d="M0.4 0.5L2.5 3L4.6 0.5" fill="none" stroke="#626262" stroke-width="0.9"/></svg><span class="t" style="left:504px;top:118px;font-size:8.6px;line-height:16px;color:#8a8a8a;transform:scaleX(0.881);">Opacity:</span><div class="r" style="left:536px;top:120px;width:26px;height:9.6px;background:#454545;"></div><span class="t" style="left:540px;top:117px;font-size:8.4px;line-height:16px;color:#707070;transform:scaleX(0.866);">100%</span><div class="r" style="left:564.2px;top:120px;width:9.8px;height:9.6px;background:#4c4c4c;box-shadow:inset 0 0 0 0.7px #5a5a5a;"></div><svg class="i" style="left:566.6px;top:124px;" width="5" height="3.6" viewBox="0 0 5 3.6"><path d="M0.4 0.5L2.5 3L4.6 0.5" fill="none" stroke="#626262" stroke-width="0.9"/></svg><div class="r" style="left:395.3px;top:134.8px;width:183.3px;height:1px;background:#474747;"></div><span class="t" style="left:400.2px;top:139px;font-size:8.6px;line-height:16px;color:#8a8a8a;transform:scaleX(0.837);">Lock:</span><svg class="i" style="left:425px;top:142.6px;" width="9.4" height="9.4" viewBox="0 0 9.4 9.4"><rect x="0.4" y="0.4" width="8.4" height="8.4" fill="none" stroke="#c2c2c2" stroke-width="0.8"/><g fill="#c2c2c2"><rect x="0.4" y="0.4" width="2.8" height="2.8"/><rect x="6" y="0.4" width="2.8" height="2.8"/><rect x="3.2" y="3.2" width="2.8" height="2.8"/><rect x="0.4" y="6" width="2.8" height="2.8"/><rect x="6" y="6" width="2.8" height="2.8"/></g></svg><svg class="i" style="left:441.6px;top:141.6px;" width="11" height="11.4" viewBox="0 0 11 11.4"><g transform="translate(5.6 5.8) scale(0.68)"><path d="M6.6-7L7.4-6.2L0.2 3.2L-1.8 1.4z" fill="#c2c2c2"/><path d="M-2.6 2.2L-0.6 4.1C-1.4 6.6-4 7.4-6.8 7C-5.2 5.8-5.4 3-2.6 2.2z" fill="#c2c2c2"/></g></svg><svg class="i" style="left:458px;top:142px;" width="11" height="11" viewBox="0 0 11 11"><g transform="translate(5.5 5.5) scale(0.74)"><g fill="none" stroke="#c2c2c2" stroke-width="1.25"><path d="M0-4.2V4.2M-4.2 0H4.2"/></g><g fill="#c2c2c2"><path d="M0-6.6L2.3-3.7H-2.3z"/><path d="M0 6.6L2.3 3.7H-2.3z"/><path d="M-6.6 0L-3.7-2.3V2.3z"/><path d="M6.6 0L3.7-2.3V2.3z"/></g></g></svg><svg class="i" style="left:475px;top:142.4px;" width="11.4" height="10.4" viewBox="0 0 11.4 10.4"><g fill="none" stroke="#c2c2c2" stroke-width="1"><path d="M1.6 0.4V9.2M0.2 1.5H6.8L10 4.4V9.2M0.2 7.5H10.9"/><path d="M6.6 1.6V4.6H9.8" stroke-width="0.8"/></g></svg><svg class="i" style="left:494px;top:141.4px;" width="9.4" height="10.6" viewBox="0 0 9.4 10.6"><rect x="0.6" y="4.4" width="8" height="5.8" fill="#c2c2c2"/><path d="M2.4 4.4V3a2.2 2.2 0 0 1 4.4 0V4.4" fill="none" stroke="#c2c2c2" stroke-width="1.2"/><rect x="4" y="6.2" width="1.3" height="2" fill="#535353"/></svg><span class="t" style="left:520.4px;top:139px;font-size:8.6px;line-height:16px;color:#8a8a8a;transform:scaleX(0.882);">Fill:</span><div class="r" style="left:536px;top:142.3px;width:26px;height:9.5px;background:#454545;"></div><span class="t" style="left:540px;top:139px;font-size:8.4px;line-height:16px;color:#707070;transform:scaleX(0.866);">100%</span><div class="r" style="left:564.2px;top:142.3px;width:9.8px;height:9.5px;background:#4c4c4c;box-shadow:inset 0 0 0 0.7px #5a5a5a;"></div><svg class="i" style="left:566.6px;top:146.2px;" width="5" height="3.6" viewBox="0 0 5 3.6"><path d="M0.4 0.5L2.5 3L4.6 0.5" fill="none" stroke="#626262" stroke-width="0.9"/></svg><div class="r" style="left:395.3px;top:159.8px;width:183.3px;height:297.8px;background:#4c4c4c;"></div><div class="r" style="left:566.6px;top:159.8px;width:12px;height:297.8px;background:#4a4a4a;"></div><div class="r" style="left:395.3px;top:159.8px;width:171.3px;height:26px;background:#535353;"></div><div class="r" style="left:395.3px;top:185.8px;width:171.3px;height:1px;background:#454545;"></div><div class="r" style="left:417.6px;top:159.8px;width:0.8px;height:26px;background:#4c4c4c;"></div><svg class="i" style="left:401px;top:170.5px;" width="10.4" height="7.2" viewBox="0 0 10.4 7.2"><path d="M0.4 3.6C2.4 0.2 8 0.2 10 3.6C8 7 2.4 7 0.4 3.6z" fill="#ececec"/><circle cx="5.2" cy="3.6" r="1.9" fill="#4a4a4a"/><circle cx="5.2" cy="3.6" r="0.8" fill="#ececec"/></svg><div class="r" style="left:421.3px;top:163.5px;width:24.7px;height:21px;background:#2e2e2e;"></div><div class="r" style="left:422.1px;top:164.3px;width:23.1px;height:19.4px;background:#fff;background-color:#fff;background-image:linear-gradient(45deg,#ccc 25%,transparent 25%,transparent 75%,#ccc 75%),linear-gradient(45deg,#ccc 25%,transparent 25%,transparent 75%,#ccc 75%);background-size:5px 5px;background-position:0 0,2.5px 2.5px;"></div><svg class="i" style="left:433.6px;top:168.1px;" width="10" height="13" viewBox="0 0 10 13"><path d="M4.8 0.6C7.4 3.4 9.6 6.6 9.4 9.4C8.4 11.6 6.6 12 5.2 12.4C3.6 12 1.4 11.6 0.6 9.4C0.6 6.6 2.4 3.4 4.8 0.6z" fill="#8d8d8d" opacity="0.85"/></svg><span class="t" style="left:454.2px;top:166px;font-size:8.7px;line-height:16px;color:#e6e6e6;transform:scaleX(0.875);">Layer 2</span><div class="r" style="left:395.3px;top:186.8px;width:171.3px;height:26.6px;background:#535353;"></div><div class="r" style="left:395.3px;top:213.4px;width:171.3px;height:1px;background:#454545;"></div><div class="r" style="left:417.6px;top:186.8px;width:0.8px;height:26.6px;background:#4c4c4c;"></div><svg class="i" style="left:401px;top:198.5px;" width="10.4" height="7.2" viewBox="0 0 10.4 7.2"><path d="M0.4 3.6C2.4 0.2 8 0.2 10 3.6C8 7 2.4 7 0.4 3.6z" fill="#ececec"/><circle cx="5.2" cy="3.6" r="1.9" fill="#4a4a4a"/><circle cx="5.2" cy="3.6" r="0.8" fill="#ececec"/></svg><div class="r" style="left:421.3px;top:191.5px;width:24.7px;height:21px;background:#2e2e2e;"></div><div class="r" style="left:422.1px;top:192.3px;width:23.1px;height:19.4px;background:#fdfd02;"></div><span class="t" style="left:454.2px;top:194px;font-size:8.7px;line-height:16px;color:#e6e6e6;transform:scaleX(0.855);">Layer 1</span><div class="r" style="left:395.3px;top:457.6px;width:183.3px;height:19px;background:#515151;"></div><div class="r" style="left:395.3px;top:457.2px;width:183.3px;height:0.8px;background:#464646;"></div><svg class="i" style="left:419px;top:463.9px;" width="13" height="6.8" viewBox="0 0 13 6.8"><g fill="none" stroke="#8e8e8e" stroke-width="1.2"><rect x="0.8" y="0.8" width="6.2" height="4.8" rx="2.4"/><rect x="5.6" y="0.8" width="6.2" height="4.8" rx="2.4"/></g></svg><span class="t" style="left:442.2px;top:460px;font-size:11px;line-height:16px;color:#8e8e8e;font-style:italic;transform:scaleX(1.099);">fx</span><svg class="i" style="left:462.4px;top:463.3px;" width="11" height="8" viewBox="0 0 11 8"><rect x="0.2" y="0.4" width="10.4" height="7.2" fill="#cfcfcf"/><circle cx="5.4" cy="4" r="2.5" fill="#535353"/></svg><svg class="i" style="left:483.8px;top:462.3px;" width="11.6" height="11.6" viewBox="0 0 11.6 11.6"><circle cx="4.9" cy="4.9" r="4.1" fill="none" stroke="#e6e6e6" stroke-width="1.1"/><path d="M7.9 2A4.1 4.1 0 0 1 2 7.9z" fill="#e6e6e6"/><path d="M11.4 8.6v2.6h-2.6z" fill="#e6e6e6"/></svg><svg class="i" style="left:504.4px;top:462.9px;" width="11" height="9" viewBox="0 0 11 9"><path d="M0.3 0.6H4L5 1.9H10.4V8.4H0.3z" fill="#e6e6e6"/></svg><svg class="i" style="left:526px;top:462.5px;" width="10" height="10" viewBox="0 0 10 10"><rect x="0.7" y="0.7" width="8.4" height="8.4" rx="0.8" fill="none" stroke="#e6e6e6" stroke-width="1.2"/><path d="M4.9 3V6.8M3 4.9H6.8" stroke="#e6e6e6" stroke-width="1.2"/></svg><svg class="i" style="left:547.2px;top:462.3px;" width="9.6" height="10.4" viewBox="0 0 9.6 10.4"><path d="M1.4 3H8.2V9.8H1.4z" fill="#8e8e8e"/><rect x="0.4" y="1.4" width="8.8" height="1.1" fill="#8e8e8e"/><rect x="3.2" y="0.2" width="3.2" height="1.4" fill="#8e8e8e"/></svg>
<div class="r" style="left:8px;top:8px;width:574px;height:1.8px;background:#1f3c4c;"></div>
<div class="r" style="left:8px;top:8px;width:1.6px;height:472px;background:#26505c;"></div>
</div></div>
<svg class="i" style="left:596px;top:222px;" width="88" height="46" viewBox="0 0 88 46"><path d="M5.8 13.8H40.4V4.4a2.4 2.4 0 0 1 3.8-1.9L83.4 21a2.2 2.2 0 0 1 0 3.8L44.2 43.6a2.4 2.4 0 0 1-3.8-1.9V31.8H5.8a3.6 3.6 0 0 1-3.6-3.6V17.4a3.6 3.6 0 0 1 3.6-3.6z" fill="#0a7cf2"/></svg>
<div class="win" style="left:702.2px;top:9px;width:570.8px;height:471.2px"><div class="in" style="left:-9.4px;top:-9px;transform-origin:0 0;transform:scaleX(0.9968)">
<div class="r" style="left:0px;top:0px;width:600px;height:491px;background:#505050;"></div><div class="r" style="left:16px;top:15px;width:11.4px;height:9.9px;background:#0a1f33;border-radius:2px;"></div><span class="t" style="left:17.9px;top:14px;font-size:6.4px;line-height:16px;color:#52acf6;font-weight:bold;transform:scaleX(0.971);">Ps</span><span class="t" style="left:39px;top:14px;font-size:10px;line-height:16px;color:#e8e8e8;transform:scaleX(0.869);">File</span><span class="t" style="left:62.3px;top:14px;font-size:10px;line-height:16px;color:#e8e8e8;transform:scaleX(0.911);">Edit</span><span class="t" style="left:87.3px;top:14px;font-size:10px;line-height:16px;color:#e8e8e8;transform:scaleX(0.932);">Image</span><span class="t" style="left:122.3px;top:14px;font-size:10px;line-height:16px;color:#e8e8e8;transform:scaleX(0.879);">Layer</span><span class="t" style="left:153.6px;top:14px;font-size:10px;line-height:16px;color:#e8e8e8;transform:scaleX(0.895);">Type</span><span class="t" style="left:182.6px;top:14px;font-size:10px;line-height:16px;color:#e8e8e8;transform:scaleX(0.878);">Select</span><span class="t" style="left:216px;top:14px;font-size:10px;line-height:16px;color:#e8e8e8;transform:scaleX(0.936);">Filter</span><span class="t" style="left:245.8px;top:14px;font-size:10px;line-height:16px;color:#e8e8e8;transform:scaleX(0.939);">3D</span><span class="t" style="left:266.4px;top:14px;font-size:10px;line-height:16px;color:#e8e8e8;transform:scaleX(0.949);">View</span><span class="t" style="left:295.8px;top:14px;font-size:10px;line-height:16px;color:#e8e8e8;transform:scaleX(0.915);">Plugins</span><span class="t" style="left:334.8px;top:14px;font-size:10px;line-height:16px;color:#e8e8e8;transform:scaleX(0.962);">Window</span><span class="t" style="left:378.4px;top:14px;font-size:10px;line-height:16px;color:#e8e8e8;transform:scaleX(0.943);">Help</span><div class="r" style="left:497.8px;top:9.6px;width:77.8px;height:14.2px;background:#545454;box-shadow:0 0 0 0.8px #494949;"></div><div class="r" style="left:518.4px;top:9.6px;width:0.9px;height:14.2px;background:#494949;"></div><div class="r" style="left:539.4px;top:9.6px;width:0.9px;height:14.2px;background:#494949;"></div><div class="r" style="left:503.6px;top:17.6px;width:8.4px;height:2.5px;background:#d6d6d6;border-radius:0.6px;"></div><svg class="i" style="left:523px;top:11px;" width="14" height="12" viewBox="0 0 14 12"><rect x="3.5" y="3.9" width="6.4" height="4.4" fill="none" stroke="#d6d6d6" stroke-width="1.9"/><rect x="2.55" y="2.9" width="8.3" height="1.4" fill="#d6d6d6"/></svg><svg class="i" style="left:553px;top:11px;" width="14" height="12" viewBox="0 0 14 12"><path d="M3.2 3.2L9.8 9.2M9.8 3.2L3.2 9.2" stroke="#dcdcdc" stroke-width="1.9"/></svg><div class="r" style="left:12px;top:31px;width:567.2px;height:26.6px;background:#535353;box-shadow:inset 0 0 0 0.8px #5d5d5d;"></div><div class="r" style="left:8px;top:57.6px;width:592px;height:1.4px;background:#3c3c3c;"></div><div class="r" style="left:14.6px;top:38px;width:1px;height:14px;background:#5e5e5e;"></div><div class="r" style="left:52.5px;top:36px;width:1px;height:18px;background:#464646;"></div><div class="r" style="left:90.9px;top:36px;width:1px;height:18px;background:#464646;"></div><div class="r" style="left:211.7px;top:36px;width:1px;height:18px;background:#464646;"></div><div class="r" style="left:331.5px;top:36px;width:1px;height:18px;background:#464646;"></div><div class="r" style="left:431.1px;top:36px;width:1px;height:18px;background:#464646;"></div><div class="r" style="left:519.1px;top:36px;width:1px;height:18px;background:#464646;"></div><svg class="i" style="left:26px;top:37px;" width="16" height="16" viewBox="0 0 16 16"><path d="M8 1.6L1.4 8H3.3V13.6H6.6V9.6H9.4V13.6H12.7V8H14.6z" fill="#ececec"/><rect x="11" y="2.6" width="1.6" height="3" fill="#ececec"/></svg><svg class="i" style="left:58px;top:37px;" width="16" height="16" viewBox="0 0 16 16"><g transform="translate(8 8) scale(0.93)"><g fill="none" stroke="#ececec" stroke-width="1.25"><path d="M0-4.2V4.2M-4.2 0H4.2"/></g><g fill="#ececec"><path d="M0-6.6L2.3-3.7H-2.3z"/><path d="M0 6.6L2.3 3.7H-2.3z"/><path d="M-6.6 0L-3.7-2.3V2.3z"/><path d="M6.6 0L3.7-2.3V2.3z"/></g></g></svg><svg class="i" style="left:80px;top:44.5px;" width="5" height="3.6" viewBox="0 0 5 3.6"><path d="M0.4 0.5L2.5 3L4.6 0.5" fill="none" stroke="#bdbdbd" stroke-width="0.9"/></svg><svg class="i" style="left:98.2px;top:41.6px;" width="8" height="8" viewBox="0 0 8 8"><rect x="0.3" y="0.3" width="7.2" height="7" rx="1.2" fill="#e8e8e8"/><path d="M1.8 3.6L3.3 5.3L6 1.9" fill="none" stroke="#2a2a2a" stroke-width="1.3"/></svg><span class="t" style="left:110.2px;top:38px;font-size:8.6px;line-height:16px;color:#dadada;transform:scaleX(0.888);">Auto-Select:</span><div class="r" style="left:164px;top:40px;width:40px;height:12.2px;background:#434343;border-radius:1.5px;"></div><span class="t" style="left:169.7px;top:38px;font-size:8.6px;line-height:16px;color:#dadada;transform:scaleX(0.879);">Layer</span><svg class="i" style="left:196.4px;top:44.8px;" width="5" height="3.6" viewBox="0 0 5 3.6"><path d="M0.4 0.5L2.5 3L4.6 0.5" fill="none" stroke="#bdbdbd" stroke-width="0.9"/></svg><svg class="i" style="left:219.4px;top:41.6px;" width="8" height="8" viewBox="0 0 8 8"><rect x="0.3" y="0.3" width="7.2" height="7" rx="1.2" fill="#e8e8e8"/><path d="M1.8 3.6L3.3 5.3L6 1.9" fill="none" stroke="#2a2a2a" stroke-width="1.3"/></svg><span class="t" style="left:231.2px;top:38px;font-size:8.6px;line-height:16px;color:#dadada;transform:scaleX(0.899);">Show Transform Controls</span><svg class="i" style="left:342px;top:39px;" width="13" height="13" viewBox="0 0 13 13"><rect x="1" y="0.6" width="0.9" height="11.6" fill="#9b9b9b"/><rect x="3" y="2" width="5.4" height="3.4" fill="#9b9b9b"/><rect x="3" y="6.8" width="8.2" height="3.4" fill="#9b9b9b"/></svg><svg class="i" style="left:362px;top:39px;" width="13" height="13" viewBox="0 0 13 13"><rect x="5.8" y="0.4" width="0.9" height="12" fill="#9b9b9b"/><rect x="3.6" y="2" width="5.4" height="3.4" fill="#9b9b9b"/><rect x="2.2" y="6.8" width="8.2" height="3.4" fill="#9b9b9b"/></svg><svg class="i" style="left:382px;top:39px;" width="13" height="13" viewBox="0 0 13 13"><rect x="11.2" y="0.6" width="0.9" height="11.6" fill="#9b9b9b"/><rect x="4.6" y="2" width="5.4" height="3.4" fill="#9b9b9b"/><rect x="1.6" y="6.8" width="8.4" height="3.4" fill="#9b9b9b"/></svg><svg class="i" style="left:408px;top:39px;" width="15" height="13" viewBox="0 0 15 13"><rect x="0.4" y="1.8" width="13.6" height="0.9" fill="#9b9b9b"/><rect x="0.4" y="9" width="13.6" height="0.9" fill="#9b9b9b"/><rect x="3" y="4.2" width="8.4" height="3.2" fill="#9b9b9b"/></svg><svg class="i" style="left:442px;top:39px;" width="14" height="13" viewBox="0 0 14 13"><rect x="1" y="1.2" width="11.6" height="0.9" fill="#9b9b9b"/><rect x="3" y="3" width="2.8" height="8.2" fill="#9b9b9b"/><rect x="7.4" y="3" width="2.8" height="5.2" fill="#9b9b9b"/></svg><svg class="i" style="left:463px;top:39px;" width="13" height="13" viewBox="0 0 13 13"><rect x="0.8" y="5.6" width="11" height="0.9" fill="#9b9b9b"/><rect x="2.8" y="1.6" width="2.8" height="9" fill="#9b9b9b"/><rect x="7.2" y="3.4" width="2.8" height="5.4" fill="#9b9b9b"/></svg><svg class="i" style="left:482px;top:39px;" width="14" height="13" viewBox="0 0 14 13"><rect x="1.4" y="10.4" width="11.8" height="0.9" fill="#9b9b9b"/><rect x="3.6" y="1.6" width="2.8" height="8" fill="#9b9b9b"/><rect x="8" y="4.4" width="2.8" height="5.2" fill="#9b9b9b"/></svg><svg class="i" style="left:500px;top:38px;" width="15" height="15" viewBox="0 0 15 15"><circle cx="6.4" cy="6.2" r="4" fill="none" stroke="#ececec" stroke-width="1.4"/><path d="M9.4 9.3L12.6 12.5" stroke="#ececec" stroke-width="1.7" stroke-linecap="round"/></svg><svg class="i" style="left:523px;top:39px;" width="16" height="13" viewBox="0 0 16 13"><rect x="1.3" y="1.8" width="12.6" height="9.6" fill="none" stroke="#ececec" stroke-width="1.2"/><rect x="3" y="3.6" width="2" height="6" fill="#ececec"/></svg><svg class="i" style="left:545px;top:44.4px;" width="5" height="3.6" viewBox="0 0 5 3.6"><path d="M0.4 0.5L2.5 3L4.6 0.5" fill="none" stroke="#bdbdbd" stroke-width="0.9"/></svg><div class="r" style="left:552.9px;top:44.3px;width:2.9px;height:2.9px;background:#f4f4f4;border-radius:50%;"></div><svg class="i" style="left:558px;top:37px;" width="17" height="15" viewBox="0 0 17 15"><path d="M5.4 5.6H2.4V13.4H14.4V5.6H11.4" fill="none" stroke="#ececec" stroke-width="1.5"/><path d="M8.4 10V2.4" stroke="#ececec" stroke-width="1.4"/><path d="M8.4 0.6L11.4 4.2H5.4z" fill="#ececec"/></svg><div class="r" style="left:576.6px;top:42px;width:1px;height:7px;background:#6a6a6a;"></div><div class="r" style="left:12px;top:59px;width:30px;height:9px;background:#3d3d3d;"></div><svg class="i" style="left:16.8px;top:60.2px;" width="6" height="6" viewBox="0 0 6 6"><path d="M0.5 0.8L2.1 2.4L0.5 4M2.7 0.8L4.3 2.4L2.7 4" fill="none" stroke="#f4f4f4" stroke-width="1.35"/></svg><div class="r" style="left:12px;top:68px;width:30px;height:412px;background:#535353;"></div><div class="r" style="left:19px;top:71px;width:15px;height:1.4px;background:#4a4a4a;"></div><div class="r" style="left:42px;top:59px;width:2px;height:421px;background:#3e3e3e;"></div><div class="r" style="left:15.3px;top:82px;width:23px;height:17.2px;background:#383838;border-radius:1.5px;"></div><svg class="i" style="left:12px;top:80px;" width="30" height="400" viewBox="12 80 30 400"><defs><linearGradient id="ggR" x1="0" x2="1"><stop offset="0" stop-color="#e8e8e8"/><stop offset="1" stop-color="#555"/></linearGradient></defs><g transform="translate(26.8 91) scale(1)"><g fill="none" stroke="#e2e2e2" stroke-width="1.25"><path d="M0-4.2V4.2M-4.2 0H4.2"/></g><g fill="#e2e2e2"><path d="M0-6.6L2.3-3.7H-2.3z"/><path d="M0 6.6L2.3 3.7H-2.3z"/><path d="M-6.6 0L-3.7-2.3V2.3z"/><path d="M6.6 0L3.7-2.3V2.3z"/></g></g><path d="M35.8 96.6v2.6h-2.6z" fill="#e2e2e2"/><g transform="translate(26.8 111.27) scale(1)"><rect x="-5.9" y="-4.9" width="11.8" height="9.8" fill="none" stroke="#e2e2e2" stroke-width="1.3" stroke-dasharray="2.6 1.6" stroke-dashoffset="1.3"/></g><path d="M35.8 116.87v2.6h-2.6z" fill="#e2e2e2"/><g transform="translate(26.8 131.54) scale(0.95)"><g fill="none" stroke="#e2e2e2" stroke-width="1.2"><ellipse cx="0.4" cy="-1.4" rx="5.9" ry="4" transform="rotate(-14)"/><path d="M-4.4 1.2c-1.6 0.6-1.6 2.6 0 2.6c1.2 0 1.2-1.6 0.2-1.4M-3.9 3.6c0.6 1.2 0.2 2.6-1 3.4"/></g></g><path d="M35.8 137.14v2.6h-2.6z" fill="#e2e2e2"/><g transform="translate(26.8 151.81) scale(1)"><rect x="-5.6" y="-4.9" width="10.6" height="9.8" fill="none" stroke="#b4b4b4" stroke-width="0.8"/><rect x="-3.3" y="-3" width="5" height="5.2" fill="#e2e2e2"/><path d="M0.6 0.2L6.8 4L4 4.6L5.6 7.4L4.4 8L2.8 5.2L0.9 7z" fill="#222" stroke="#e2e2e2" stroke-width="0.9"/></g><path d="M35.8 157.41v2.6h-2.6z" fill="#e2e2e2"/><g transform="translate(26.8 172.08) scale(0.95)"><g fill="none" stroke="#e2e2e2" stroke-width="1.35"><path d="M-3.3-6.4V3.3H6.6"/><path d="M-6.6-3.3H3.3V6.4"/></g></g><path d="M35.8 177.68v2.6h-2.6z" fill="#e2e2e2"/><g transform="translate(26.8 192.35) scale(1)"><g fill="none" stroke="#e2e2e2" stroke-width="1.2"><rect x="-6" y="-5.4" width="12" height="10.8"/><path d="M-6-5.4L6 5.4M6-5.4L-6 5.4"/></g></g><g transform="translate(26.8 212.62) scale(1)"><g transform="rotate(45)"><rect x="-1.5" y="-8" width="3" height="4.2" rx="1.2" fill="#e2e2e2"/><rect x="-2.8" y="-4.2" width="5.6" height="1.7" fill="#e2e2e2"/><path d="M-1.5-2.5V4.4L0 7.2L1.5 4.4V-2.5z" fill="none" stroke="#e2e2e2" stroke-width="1"/></g></g><path d="M35.8 218.22v2.6h-2.6z" fill="#e2e2e2"/><g transform="translate(26.8 232.89) scale(0.92)"><g transform="rotate(-40)"><rect x="-7" y="-3" width="14" height="6" rx="1.6" fill="#e2e2e2"/><g stroke="#535353" stroke-width="0.9"><path d="M-3.2-3V3M-1.1-3V3M1.1-3V3M3.2-3V3"/></g></g><path d="M-5.6-1.4a3 3 0 0 1 3.4-4.4" fill="none" stroke="#e2e2e2" stroke-width="0.8" stroke-dasharray="1 0.8"/></g><path d="M35.8 238.49v2.6h-2.6z" fill="#e2e2e2"/><g transform="translate(26.8 253.16) scale(0.8)"><path d="M6.6-7L7.4-6.2L0.2 3.2L-1.8 1.4z" fill="#e2e2e2"/><path d="M-2.6 2.2L-0.6 4.1C-1.4 6.6-4 7.4-6.8 7C-5.2 5.8-5.4 3-2.6 2.2z" fill="#e2e2e2"/></g><path d="M35.8 258.76v2.6h-2.6z" fill="#e2e2e2"/><g transform="translate(26.8 273.43) scale(0.92)"><path d="M-2.3-4.6a2.3 2.3 0 1 1 4.6 0c0 1.6-1.1 2.2-1.1 4.2H4.6a1.2 1.2 0 0 1 1.2 1.2V3H-5.8V0.8A1.2 1.2 0 0 1-4.6-0.4H-1.2c0-2-1.1-2.6-1.1-4.2z" fill="#e2e2e2"/><rect x="-5.8" y="4.4" width="11.6" height="1.6" fill="#e2e2e2"/></g><path d="M35.8 279.03v2.6h-2.6z" fill="#e2e2e2"/><g transform="translate(26.8 293.7) scale(0.9)"><path d="M6.8-7L7.6-6.2L1.4 2.6L-0.4 1z" fill="#e2e2e2"/><path d="M-1.2 1.8L0.8 3.6C0 6-2.4 6.8-5 6.4C-3.6 5.2-3.8 2.6-1.2 1.8z" fill="#e2e2e2"/><path d="M-3.6-3.4c-0.4 1.6-2.8 1.8-3.4 0.2c-0.7-1.9 0.8-3.6 3-3.8c2.2-0.2 3.6 0.4 5.6 0.1" fill="none" stroke="#e2e2e2" stroke-width="1.05"/><path d="M5.6-1.4C7.4 2.2 5.4 6 1.6 6.9" fill="none" stroke="#e2e2e2" stroke-width="1"/><path d="M3.6 0.4C4.6 2.4 3.8 4.4 2 5.2" fill="none" stroke="#e2e2e2" stroke-width="0.7"/></g><path d="M35.8 299.3v2.6h-2.6z" fill="#e2e2e2"/><g transform="translate(26.8 313.97) scale(0.9)"><g transform="translate(1.4 1.2) rotate(-35)"><rect x="-5" y="-2.9" width="10.4" height="5.8" rx="0.8" fill="#e2e2e2"/><rect x="-5" y="-2.9" width="3.4" height="5.8" rx="0.8" fill="#535353" stroke="#e2e2e2" stroke-width="0.9"/></g><g fill="#e2e2e2"><circle cx="-4.6" cy="-5.4" r="0.9"/><circle cx="-1" cy="-6.8" r="0.8"/><circle cx="-6.6" cy="-1.6" r="0.8"/><path d="M-3-4.2l0.5-1.3l0.5 1.3l1.3 0.5l-1.3 0.5l-0.5 1.3l-0.5-1.3l-1.3-0.5z"/></g></g><path d="M35.8 319.57v2.6h-2.6z" fill="#e2e2e2"/><g transform="translate(26.8 334.24) scale(1)"><rect x="-6" y="-5.4" width="12" height="10.8" fill="url(#ggR)" stroke="#e2e2e2" stroke-width="1"/></g><path d="M35.8 339.84v2.6h-2.6z" fill="#e2e2e2"/><g transform="translate(26.8 354.51) scale(1)"><path d="M0-6.8C2.2-3.4 4.4-0.8 4.4 2A4.4 4.4 0 0 1-4.4 2C-4.4-0.8-2.2-3.4 0-6.8z" fill="#e2e2e2"/></g><path d="M35.8 360.11v2.6h-2.6z" fill="#e2e2e2"/><g transform="translate(26.8 374.78) scale(1)"><circle cx="1.8" cy="-2.4" r="3.5" fill="#c4c4c4" stroke="#e2e2e2" stroke-width="0.9"/><path d="M-1-0.2L-6 5.4" stroke="#e2e2e2" stroke-width="1.7" stroke-linecap="round"/></g><path d="M35.8 380.38v2.6h-2.6z" fill="#e2e2e2"/><g transform="translate(26.8 395.05) scale(1)"><g transform="rotate(225)"><path d="M0-7.2C2.6-4.4 3.8-1.6 3.4 1.6H-3.4C-3.8-1.6-2.6-4.4 0-7.2z" fill="none" stroke="#e2e2e2" stroke-width="1.1"/><path d="M0-6.4V-2" stroke="#e2e2e2" stroke-width="0.9"/><circle cx="0" cy="-1.2" r="1" fill="#e2e2e2"/><rect x="-3.6" y="2.6" width="7.2" height="2.4" fill="#e2e2e2"/></g></g><path d="M35.8 400.65v2.6h-2.6z" fill="#e2e2e2"/><path d="M35.8 420.92v2.6h-2.6z" fill="#e2e2e2"/><g transform="translate(26.8 435.59) scale(1)"><path d="M-3.9-6.6L3.9 1.4L0.5 1.7L2.6 6.1L0.7 7L-1.4 2.6L-3.9 5z" fill="#111" stroke="#e2e2e2" stroke-width="1"/></g><path d="M35.8 441.19v2.6h-2.6z" fill="#e2e2e2"/><g transform="translate(26.8 455.86) scale(1)"><rect x="-6.2" y="-4.6" width="12.4" height="9.4" fill="#7a7a7a" stroke="#e2e2e2" stroke-width="1.1"/></g><path d="M35.8 461.46v2.6h-2.6z" fill="#e2e2e2"/><g transform="translate(26.8 476.13) scale(1)"><g transform="translate(1.2 -3)"><path d="M-2.2 4V-1.6M-0.2 4V-2.8M1.8 4V-2.4M3.8 4V-0.8" stroke="#e2e2e2" stroke-width="1.5"/><rect x="-2.9" y="1.2" width="7.4" height="3" fill="#e2e2e2"/></g></g><path d="M35.8 481.73v2.6h-2.6z" fill="#e2e2e2"/><rect x="21.4" y="475.6" width="1.6" height="1.6" fill="#e2e2e2"/></svg><span class="t ff-s" style="left:21.4px;top:403px;font-size:15.5px;line-height:26px;color:#e2e2e2;transform:scaleX(1.225);">T</span><div class="r" style="left:44px;top:59px;width:349px;height:21px;background:#424242;"></div><div class="r" style="left:44px;top:60px;width:172.8px;height:20px;background:#535353;"></div><span class="t" style="left:51.8px;top:62px;font-size:8.9px;line-height:16px;color:#f0f0f0;font-weight:bold;transform:scaleX(0.950);">AddTextLayer.psd @ 100% (RGB/8#)</span><svg class="i" style="left:203.2px;top:67px;" width="6" height="6" viewBox="0 0 6 6"><path d="M0.8 0.8L5.2 5.2M5.2 0.8L0.8 5.2" stroke="#9c9c9c" stroke-width="0.8"/></svg><div class="r" style="left:44px;top:80px;width:336px;height:14px;background:#484848;"></div><div class="r" style="left:44px;top:94px;width:12.4px;height:370px;background:#484848;"></div><div class="r" style="left:44px;top:80px;width:12.4px;height:14px;background:#4d4d4d;box-shadow:inset -0.6px -0.6px 0 #5c5c5c;"></div><svg class="i" style="left:56px;top:80px;" width="324" height="14" viewBox="56 80 324 14"><rect x="61.65" y="81" width="0.7" height="13" fill="#5a5a5a"/><rect x="64.83" y="91.8" width="0.6" height="2.2" fill="#5e5e5e"/><rect x="67.95" y="91.8" width="0.6" height="2.2" fill="#5e5e5e"/><rect x="71.08" y="91.8" width="0.6" height="2.2" fill="#5e5e5e"/><rect x="74.2" y="91.8" width="0.6" height="2.2" fill="#5e5e5e"/><rect x="77.33" y="90.4" width="0.6" height="3.6" fill="#5e5e5e"/><rect x="80.45" y="91.8" width="0.6" height="2.2" fill="#5e5e5e"/><rect x="83.58" y="91.8" width="0.6" height="2.2" fill="#5e5e5e"/><rect x="86.7" y="91.8" width="0.6" height="2.2" fill="#5e5e5e"/><rect x="89.83" y="91.8" width="0.6" height="2.2" fill="#5e5e5e"/><rect x="92.9" y="81" width="0.7" height="13" fill="#5a5a5a"/><rect x="96.08" y="91.8" width="0.6" height="2.2" fill="#5e5e5e"/><rect x="99.2" y="91.8" width="0.6" height="2.2" fill="#5e5e5e"/><rect x="102.33" y="91.8" width="0.6" height="2.2" fill="#5e5e5e"/><rect x="105.45" y="91.8" width="0.6" height="2.2" fill="#5e5e5e"/><rect x="108.58" y="90.4" width="0.6" height="3.6" fill="#5e5e5e"/><rect x="111.7" y="91.8" width="0.6" height="2.2" fill="#5e5e5e"/><rect x="114.83" y="91.8" width="0.6" height="2.2" fill="#5e5e5e"/><rect x="117.95" y="91.8" width="0.6" height="2.2" fill="#5e5e5e"/><rect x="121.08" y="91.8" width="0.6" height="2.2" fill="#5e5e5e"/><rect x="124.15" y="81" width="0.7" height="13" fill="#5a5a5a"/><rect x="127.33" y="91.8" width="0.6" height="2.2" fill="#5e5e5e"/><rect x="130.45" y="91.8" width="0.6" height="2.2" fill="#5e5e5e"/><rect x="133.57" y="91.8" width="0.6" height="2.2" fill="#5e5e5e"/><rect x="136.7" y="91.8" width="0.6" height="2.2" fill="#5e5e5e"/><rect x="139.82" y="90.4" width="0.6" height="3.6" fill="#5e5e5e"/><rect x="142.95" y="91.8" width="0.6" height="2.2" fill="#5e5e5e"/><rect x="146.07" y="91.8" width="0.6" height="2.2" fill="#5e5e5e"/><rect x="149.2" y="91.8" width="0.6" height="2.2" fill="#5e5e5e"/><rect x="152.32" y="91.8" width="0.6" height="2.2" fill="#5e5e5e"/><rect x="155.4" y="81" width="0.7" height="13" fill="#5a5a5a"/><rect x="158.57" y="91.8" width="0.6" height="2.2" fill="#5e5e5e"/><rect x="161.7" y="91.8" width="0.6" height="2.2" fill="#5e5e5e"/><rect x="164.82" y="91.8" width="0.6" height="2.2" fill="#5e5e5e"/><rect x="167.95" y="91.8" width="0.6" height="2.2" fill="#5e5e5e"/><rect x="171.07" y="90.4" width="0.6" height="3.6" fill="#5e5e5e"/><rect x="174.2" y="91.8" width="0.6" height="2.2" fill="#5e5e5e"/><rect x="177.32" y="91.8" width="0.6" height="2.2" fill="#5e5e5e"/><rect x="180.45" y="91.8" width="0.6" height="2.2" fill="#5e5e5e"/><rect x="183.57" y="91.8" width="0.6" height="2.2" fill="#5e5e5e"/><rect x="186.65" y="81" width="0.7" height="13" fill="#5a5a5a"/><rect x="189.82" y="91.8" width="0.6" height="2.2" fill="#5e5e5e"/><rect x="192.95" y="91.8" width="0.6" height="2.2" fill="#5e5e5e"/><rect x="196.07" y="91.8" width="0.6" height="2.2" fill="#5e5e5e"/><rect x="199.2" y="91.8" width="0.6" height="2.2" fill="#5e5e5e"/><rect x="202.32" y="90.4" width="0.6" height="3.6" fill="#5e5e5e"/><rect x="205.45" y="91.8" width="0.6" height="2.2" fill="#5e5e5e"/><rect x="208.57" y="91.8" width="0.6" height="2.2" fill="#5e5e5e"/><rect x="211.7" y="91.8" width="0.6" height="2.2" fill="#5e5e5e"/><rect x="214.82" y="91.8" width="0.6" height="2.2" fill="#5e5e5e"/><rect x="217.9" y="81" width="0.7" height="13" fill="#5a5a5a"/><rect x="221.07" y="91.8" width="0.6" height="2.2" fill="#5e5e5e"/><rect x="224.2" y="91.8" width="0.6" height="2.2" fill="#5e5e5e"/><rect x="227.32" y="91.8" width="0.6" height="2.2" fill="#5e5e5e"/><rect x="230.45" y="91.8" width="0.6" height="2.2" fill="#5e5e5e"/><rect x="233.57" y="90.4" width="0.6" height="3.6" fill="#5e5e5e"/><rect x="236.7" y="91.8" width="0.6" height="2.2" fill="#5e5e5e"/><rect x="239.82" y="91.8" width="0.6" height="2.2" fill="#5e5e5e"/><rect x="242.95" y="91.8" width="0.6" height="2.2" fill="#5e5e5e"/><rect x="246.07" y="91.8" width="0.6" height="2.2" fill="#5e5e5e"/><rect x="249.15" y="81" width="0.7" height="13" fill="#5a5a5a"/><rect x="252.32" y="91.8" width="0.6" height="2.2" fill="#5e5e5e"/><rect x="255.45" y="91.8" width="0.6" height="2.2" fill="#5e5e5e"/><rect x="258.57" y="91.8" width="0.6" height="2.2" fill="#5e5e5e"/><rect x="261.7" y="91.8" width="0.6" height="2.2" fill="#5e5e5e"/><rect x="264.82" y="90.4" width="0.6" height="3.6" fill="#5e5e5e"/><rect x="267.95" y="91.8" width="0.6" height="2.2" fill="#5e5e5e"/><rect x="271.07" y="91.8" width="0.6" height="2.2" fill="#5e5e5e"/><rect x="274.2" y="91.8" width="0.6" height="2.2" fill="#5e5e5e"/><rect x="277.32" y="91.8" width="0.6" height="2.2" fill="#5e5e5e"/><rect x="280.4" y="81" width="0.7" height="13" fill="#5a5a5a"/><rect x="283.57" y="91.8" width="0.6" height="2.2" fill="#5e5e5e"/><rect x="286.7" y="91.8" width="0.6" height="2.2" fill="#5e5e5e"/><rect x="289.82" y="91.8" width="0.6" height="2.2" fill="#5e5e5e"/><rect x="292.95" y="91.8" width="0.6" height="2.2" fill="#5e5e5e"/><rect x="296.07" y="90.4" width="0.6" height="3.6" fill="#5e5e5e"/><rect x="299.2" y="91.8" width="0.6" height="2.2" fill="#5e5e5e"/><rect x="302.32" y="91.8" width="0.6" height="2.2" fill="#5e5e5e"/><rect x="305.45" y="91.8" width="0.6" height="2.2" fill="#5e5e5e"/><rect x="308.57" y="91.8" width="0.6" height="2.2" fill="#5e5e5e"/><rect x="311.65" y="81" width="0.7" height="13" fill="#5a5a5a"/><rect x="314.82" y="91.8" width="0.6" height="2.2" fill="#5e5e5e"/><rect x="317.95" y="91.8" width="0.6" height="2.2" fill="#5e5e5e"/><rect x="321.07" y="91.8" width="0.6" height="2.2" fill="#5e5e5e"/><rect x="324.2" y="91.8" width="0.6" height="2.2" fill="#5e5e5e"/><rect x="327.32" y="90.4" width="0.6" height="3.6" fill="#5e5e5e"/><rect x="330.45" y="91.8" width="0.6" height="2.2" fill="#5e5e5e"/><rect x="333.57" y="91.8" width="0.6" height="2.2" fill="#5e5e5e"/><rect x="336.7" y="91.8" width="0.6" height="2.2" fill="#5e5e5e"/><rect x="339.82" y="91.8" width="0.6" height="2.2" fill="#5e5e5e"/><rect x="342.9" y="81" width="0.7" height="13" fill="#5a5a5a"/><rect x="346.07" y="91.8" width="0.6" height="2.2" fill="#5e5e5e"/><rect x="349.2" y="91.8" width="0.6" height="2.2" fill="#5e5e5e"/><rect x="352.32" y="91.8" width="0.6" height="2.2" fill="#5e5e5e"/><rect x="355.45" y="91.8" width="0.6" height="2.2" fill="#5e5e5e"/><rect x="358.57" y="90.4" width="0.6" height="3.6" fill="#5e5e5e"/><rect x="361.7" y="91.8" width="0.6" height="2.2" fill="#5e5e5e"/><rect x="364.82" y="91.8" width="0.6" height="2.2" fill="#5e5e5e"/><rect x="367.95" y="91.8" width="0.6" height="2.2" fill="#5e5e5e"/><rect x="371.07" y="91.8" width="0.6" height="2.2" fill="#5e5e5e"/><rect x="374.15" y="81" width="0.7" height="13" fill="#5a5a5a"/><rect x="377.32" y="91.8" width="0.6" height="2.2" fill="#5e5e5e"/><rect x="58.58" y="91.8" width="0.6" height="2.2" fill="#646464"/><rect x="55.45" y="91.8" width="0.6" height="2.2" fill="#646464"/></svg><span class="t" style="left:63.6px;top:81px;font-size:9.4px;line-height:16px;color:#a4a8ae;transform:scaleX(0.880);">100</span><span class="t" style="left:94.85px;top:81px;font-size:9.4px;line-height:16px;color:#a4a8ae;transform:scaleX(0.880);">50</span><span class="t" style="left:126.1px;top:81px;font-size:9.4px;line-height:16px;color:#a4a8ae;transform:scaleX(0.880);">0</span><span class="t" style="left:157.35px;top:81px;font-size:9.4px;line-height:16px;color:#a4a8ae;transform:scaleX(0.880);">50</span><span class="t" style="left:188.6px;top:81px;font-size:9.4px;line-height:16px;color:#a4a8ae;transform:scaleX(0.880);">100</span><span class="t" style="left:219.85px;top:81px;font-size:9.4px;line-height:16px;color:#a4a8ae;transform:scaleX(0.880);">150</span><span class="t" style="left:251.1px;top:81px;font-size:9.4px;line-height:16px;color:#a4a8ae;transform:scaleX(0.880);">200</span><span class="t" style="left:282.35px;top:81px;font-size:9.4px;line-height:16px;color:#a4a8ae;transform:scaleX(0.880);">250</span><span class="t" style="left:313.6px;top:81px;font-size:9.4px;line-height:16px;color:#a4a8ae;transform:scaleX(0.880);">300</span><span class="t" style="left:344.85px;top:81px;font-size:9.4px;line-height:16px;color:#a4a8ae;transform:scaleX(0.880);">350</span><span class="t" style="left:376.1px;top:81px;font-size:9.4px;line-height:16px;color:#a4a8ae;transform:scaleX(0.880);">4</span><svg class="i" style="left:44px;top:94px;" width="12" height="370" viewBox="44 94 12 370"><rect x="54" y="96.58" width="2" height="0.6" fill="#5c5c5c"/><rect x="54" y="99.7" width="2" height="0.6" fill="#5c5c5c"/><rect x="54" y="102.83" width="2" height="0.6" fill="#5c5c5c"/><rect x="44.6" y="105.9" width="11.4" height="0.7" fill="#5a5a5a"/><rect x="54" y="109.08" width="2" height="0.6" fill="#5c5c5c"/><rect x="54" y="112.2" width="2" height="0.6" fill="#5c5c5c"/><rect x="54" y="115.33" width="2" height="0.6" fill="#5c5c5c"/><rect x="54" y="118.45" width="2" height="0.6" fill="#5c5c5c"/><rect x="52.6" y="121.58" width="3.4" height="0.6" fill="#5c5c5c"/><rect x="54" y="124.7" width="2" height="0.6" fill="#5c5c5c"/><rect x="54" y="127.83" width="2" height="0.6" fill="#5c5c5c"/><rect x="54" y="130.95" width="2" height="0.6" fill="#5c5c5c"/><rect x="54" y="134.07" width="2" height="0.6" fill="#5c5c5c"/><rect x="44.6" y="137.15" width="11.4" height="0.7" fill="#5a5a5a"/><rect x="54" y="140.32" width="2" height="0.6" fill="#5c5c5c"/><rect x="54" y="143.45" width="2" height="0.6" fill="#5c5c5c"/><rect x="54" y="146.57" width="2" height="0.6" fill="#5c5c5c"/><rect x="54" y="149.7" width="2" height="0.6" fill="#5c5c5c"/><rect x="52.6" y="152.82" width="3.4" height="0.6" fill="#5c5c5c"/><rect x="54" y="155.95" width="2" height="0.6" fill="#5c5c5c"/><rect x="54" y="159.07" width="2" height="0.6" fill="#5c5c5c"/><rect x="54" y="162.2" width="2" height="0.6" fill="#5c5c5c"/><rect x="54" y="165.32" width="2" height="0.6" fill="#5c5c5c"/><rect x="44.6" y="168.4" width="11.4" height="0.7" fill="#5a5a5a"/><rect x="54" y="171.57" width="2" height="0.6" fill="#5c5c5c"/><rect x="54" y="174.7" width="2" height="0.6" fill="#5c5c5c"/><rect x="54" y="177.82" width="2" height="0.6" fill="#5c5c5c"/><rect x="54" y="180.95" width="2" height="0.6" fill="#5c5c5c"/><rect x="52.6" y="184.07" width="3.4" height="0.6" fill="#5c5c5c"/><rect x="54" y="187.2" width="2" height="0.6" fill="#5c5c5c"/><rect x="54" y="190.32" width="2" height="0.6" fill="#5c5c5c"/><rect x="54" y="193.45" width="2" height="0.6" fill="#5c5c5c"/><rect x="54" y="196.57" width="2" height="0.6" fill="#5c5c5c"/><rect x="44.6" y="199.65" width="11.4" height="0.7" fill="#5a5a5a"/><rect x="54" y="202.82" width="2" height="0.6" fill="#5c5c5c"/><rect x="54" y="205.95" width="2" height="0.6" fill="#5c5c5c"/><rect x="54" y="209.07" width="2" height="0.6" fill="#5c5c5c"/><rect x="54" y="212.2" width="2" height="0.6" fill="#5c5c5c"/><rect x="52.6" y="215.32" width="3.4" height="0.6" fill="#5c5c5c"/><rect x="54" y="218.45" width="2" height="0.6" fill="#5c5c5c"/><rect x="54" y="221.57" width="2" height="0.6" fill="#5c5c5c"/><rect x="54" y="224.7" width="2" height="0.6" fill="#5c5c5c"/><rect x="54" y="227.82" width="2" height="0.6" fill="#5c5c5c"/><rect x="44.6" y="230.9" width="11.4" height="0.7" fill="#5a5a5a"/><rect x="54" y="234.07" width="2" height="0.6" fill="#5c5c5c"/><rect x="54" y="237.2" width="2" height="0.6" fill="#5c5c5c"/><rect x="54" y="240.32" width="2" height="0.6" fill="#5c5c5c"/><rect x="54" y="243.45" width="2" height="0.6" fill="#5c5c5c"/><rect x="52.6" y="246.57" width="3.4" height="0.6" fill="#5c5c5c"/><rect x="54" y="249.7" width="2" height="0.6" fill="#5c5c5c"/><rect x="54" y="252.82" width="2" height="0.6" fill="#5c5c5c"/><rect x="54" y="255.95" width="2" height="0.6" fill="#5c5c5c"/><rect x="54" y="259.07" width="2" height="0.6" fill="#5c5c5c"/><rect x="44.6" y="262.15" width="11.4" height="0.7" fill="#5a5a5a"/><rect x="54" y="265.32" width="2" height="0.6" fill="#5c5c5c"/><rect x="54" y="268.45" width="2" height="0.6" fill="#5c5c5c"/><rect x="54" y="271.57" width="2" height="0.6" fill="#5c5c5c"/><rect x="54" y="274.7" width="2" height="0.6" fill="#5c5c5c"/><rect x="52.6" y="277.82" width="3.4" height="0.6" fill="#5c5c5c"/><rect x="54" y="280.95" width="2" height="0.6" fill="#5c5c5c"/><rect x="54" y="284.07" width="2" height="0.6" fill="#5c5c5c"/><rect x="54" y="287.2" width="2" height="0.6" fill="#5c5c5c"/><rect x="54" y="290.32" width="2" height="0.6" fill="#5c5c5c"/><rect x="44.6" y="293.4" width="11.4" height="0.7" fill="#5a5a5a"/><rect x="54" y="296.57" width="2" height="0.6" fill="#5c5c5c"/><rect x="54" y="299.7" width="2" height="0.6" fill="#5c5c5c"/><rect x="54" y="302.82" width="2" height="0.6" fill="#5c5c5c"/><rect x="54" y="305.95" width="2" height="0.6" fill="#5c5c5c"/><rect x="52.6" y="309.07" width="3.4" height="0.6" fill="#5c5c5c"/><rect x="54" y="312.2" width="2" height="0.6" fill="#5c5c5c"/><rect x="54" y="315.32" width="2" height="0.6" fill="#5c5c5c"/><rect x="54" y="318.45" width="2" height="0.6" fill="#5c5c5c"/><rect x="54" y="321.57" width="2" height="0.6" fill="#5c5c5c"/><rect x="44.6" y="324.65" width="11.4" height="0.7" fill="#5a5a5a"/><rect x="54" y="327.82" width="2" height="0.6" fill="#5c5c5c"/><rect x="54" y="330.95" width="2" height="0.6" fill="#5c5c5c"/><rect x="54" y="334.07" width="2" height="0.6" fill="#5c5c5c"/><rect x="54" y="337.2" width="2" height="0.6" fill="#5c5c5c"/><rect x="52.6" y="340.32" width="3.4" height="0.6" fill="#5c5c5c"/><rect x="54" y="343.45" width="2" height="0.6" fill="#5c5c5c"/><rect x="54" y="346.57" width="2" height="0.6" fill="#5c5c5c"/><rect x="54" y="349.7" width="2" height="0.6" fill="#5c5c5c"/><rect x="54" y="352.82" width="2" height="0.6" fill="#5c5c5c"/><rect x="44.6" y="355.9" width="11.4" height="0.7" fill="#5a5a5a"/><rect x="54" y="359.07" width="2" height="0.6" fill="#5c5c5c"/><rect x="54" y="362.2" width="2" height="0.6" fill="#5c5c5c"/><rect x="54" y="365.32" width="2" height="0.6" fill="#5c5c5c"/><rect x="54" y="368.45" width="2" height="0.6" fill="#5c5c5c"/><rect x="52.6" y="371.57" width="3.4" height="0.6" fill="#5c5c5c"/><rect x="54" y="374.7" width="2" height="0.6" fill="#5c5c5c"/><rect x="54" y="377.82" width="2" height="0.6" fill="#5c5c5c"/><rect x="54" y="380.95" width="2" height="0.6" fill="#5c5c5c"/><rect x="54" y="384.07" width="2" height="0.6" fill="#5c5c5c"/><rect x="44.6" y="387.15" width="11.4" height="0.7" fill="#5a5a5a"/><rect x="54" y="390.32" width="2" height="0.6" fill="#5c5c5c"/><rect x="54" y="393.45" width="2" height="0.6" fill="#5c5c5c"/><rect x="54" y="396.57" width="2" height="0.6" fill="#5c5c5c"/><rect x="54" y="399.7" width="2" height="0.6" fill="#5c5c5c"/><rect x="52.6" y="402.82" width="3.4" height="0.6" fill="#5c5c5c"/><rect x="54" y="405.95" width="2" height="0.6" fill="#5c5c5c"/><rect x="54" y="409.07" width="2" height="0.6" fill="#5c5c5c"/><rect x="54" y="412.2" width="2" height="0.6" fill="#5c5c5c"/><rect x="54" y="415.32" width="2" height="0.6" fill="#5c5c5c"/><rect x="44.6" y="418.4" width="11.4" height="0.7" fill="#5a5a5a"/><rect x="54" y="421.57" width="2" height="0.6" fill="#5c5c5c"/><rect x="54" y="424.7" width="2" height="0.6" fill="#5c5c5c"/><rect x="54" y="427.82" width="2" height="0.6" fill="#5c5c5c"/><rect x="54" y="430.95" width="2" height="0.6" fill="#5c5c5c"/><rect x="52.6" y="434.07" width="3.4" height="0.6" fill="#5c5c5c"/><rect x="54" y="437.2" width="2" height="0.6" fill="#5c5c5c"/><rect x="54" y="440.32" width="2" height="0.6" fill="#5c5c5c"/><rect x="54" y="443.45" width="2" height="0.6" fill="#5c5c5c"/><rect x="54" y="446.57" width="2" height="0.6" fill="#5c5c5c"/><rect x="44.6" y="449.65" width="11.4" height="0.7" fill="#5a5a5a"/><rect x="54" y="452.82" width="2" height="0.6" fill="#5c5c5c"/><rect x="54" y="455.95" width="2" height="0.6" fill="#5c5c5c"/><rect x="54" y="459.07" width="2" height="0.6" fill="#5c5c5c"/><rect x="54" y="462.2" width="2" height="0.6" fill="#5c5c5c"/></svg><div class="clip" style="left:44px;top:94px;width:12px;height:370px"><div class="r" style="left:-44px;top:-94px"><span class="t" style="left:45.3px;top:92px;font-size:9.4px;line-height:16px;color:#a4a8ae;transform:scaleX(0.880);">0</span><span class="t" style="left:45.3px;top:106px;font-size:9.4px;line-height:16px;color:#a4a8ae;transform:scaleX(0.880);">1</span><span class="t" style="left:45.3px;top:115px;font-size:9.4px;line-height:16px;color:#a4a8ae;transform:scaleX(0.880);">5</span><span class="t" style="left:45.3px;top:124px;font-size:9.4px;line-height:16px;color:#a4a8ae;transform:scaleX(0.880);">0</span><span class="t" style="left:45.3px;top:137px;font-size:9.4px;line-height:16px;color:#a4a8ae;transform:scaleX(0.880);">1</span><span class="t" style="left:45.3px;top:146px;font-size:9.4px;line-height:16px;color:#a4a8ae;transform:scaleX(0.880);">0</span><span class="t" style="left:45.3px;top:155px;font-size:9.4px;line-height:16px;color:#a4a8ae;transform:scaleX(0.880);">0</span><span class="t" style="left:45.3px;top:169px;font-size:9.4px;line-height:16px;color:#a4a8ae;transform:scaleX(0.880);">5</span><span class="t" style="left:45.3px;top:177px;font-size:9.4px;line-height:16px;color:#a4a8ae;transform:scaleX(0.880);">0</span><span class="t" style="left:45.3px;top:200px;font-size:9.4px;line-height:16px;color:#a4a8ae;transform:scaleX(0.880);">0</span><span class="t" style="left:45.3px;top:231px;font-size:9.4px;line-height:16px;color:#a4a8ae;transform:scaleX(0.880);">5</span><span class="t" style="left:45.3px;top:240px;font-size:9.4px;line-height:16px;color:#a4a8ae;transform:scaleX(0.880);">0</span><span class="t" style="left:45.3px;top:262px;font-size:9.4px;line-height:16px;color:#a4a8ae;transform:scaleX(0.880);">1</span><span class="t" style="left:45.3px;top:271px;font-size:9.4px;line-height:16px;color:#a4a8ae;transform:scaleX(0.880);">0</span><span class="t" style="left:45.3px;top:280px;font-size:9.4px;line-height:16px;color:#a4a8ae;transform:scaleX(0.880);">0</span><span class="t" style="left:45.3px;top:294px;font-size:9.4px;line-height:16px;color:#a4a8ae;transform:scaleX(0.880);">1</span><span class="t" style="left:45.3px;top:302px;font-size:9.4px;line-height:16px;color:#a4a8ae;transform:scaleX(0.880);">5</span><span class="t" style="left:45.3px;top:311px;font-size:9.4px;line-height:16px;color:#a4a8ae;transform:scaleX(0.880);">0</span><span class="t" style="left:45.3px;top:325px;font-size:9.4px;line-height:16px;color:#a4a8ae;transform:scaleX(0.880);">2</span><span class="t" style="left:45.3px;top:334px;font-size:9.4px;line-height:16px;color:#a4a8ae;transform:scaleX(0.880);">0</span><span class="t" style="left:45.3px;top:342px;font-size:9.4px;line-height:16px;color:#a4a8ae;transform:scaleX(0.880);">0</span><span class="t" style="left:45.3px;top:356px;font-size:9.4px;line-height:16px;color:#a4a8ae;transform:scaleX(0.880);">2</span><span class="t" style="left:45.3px;top:365px;font-size:9.4px;line-height:16px;color:#a4a8ae;transform:scaleX(0.880);">5</span><span class="t" style="left:45.3px;top:374px;font-size:9.4px;line-height:16px;color:#a4a8ae;transform:scaleX(0.880);">0</span><span class="t" style="left:45.3px;top:387px;font-size:9.4px;line-height:16px;color:#a4a8ae;transform:scaleX(0.880);">3</span><span class="t" style="left:45.3px;top:396px;font-size:9.4px;line-height:16px;color:#a4a8ae;transform:scaleX(0.880);">0</span><span class="t" style="left:45.3px;top:405px;font-size:9.4px;line-height:16px;color:#a4a8ae;transform:scaleX(0.880);">0</span><span class="t" style="left:45.3px;top:419px;font-size:9.4px;line-height:16px;color:#a4a8ae;transform:scaleX(0.880);">3</span><span class="t" style="left:45.3px;top:427px;font-size:9.4px;line-height:16px;color:#a4a8ae;transform:scaleX(0.880);">5</span><span class="t" style="left:45.3px;top:436px;font-size:9.4px;line-height:16px;color:#a4a8ae;transform:scaleX(0.880);">0</span><span class="t" style="left:45.3px;top:450px;font-size:9.4px;line-height:16px;color:#a4a8ae;transform:scaleX(0.880);">4</span></div></div><div class="r" style="left:56.4px;top:94px;width:323.6px;height:370px;background:#282828;"></div><div class="r" style="left:124.5px;top:200px;width:187.7px;height:156.4px;background:#fdfd02;"></div><svg class="i" style="left:208px;top:214px;" width="96" height="128" viewBox="208 214 96 128"><defs><radialGradient id="lgR" cx="0.52" cy="0.6" r="0.62"><stop offset="0" stop-color="#98982a"/><stop offset="0.55" stop-color="#868620"/><stop offset="0.88" stop-color="#6c6c14"/><stop offset="1" stop-color="#54540c"/></radialGradient>
<clipPath id="lcR"><path d="M251 235.6C254.6 238.6 258.4 241.8 262 244.8C265.6 248 269 251.2 272 254.8C275.2 258 278 261.2 280.6 264.8C283.8 268.6 286.8 272.4 289.2 276.2C291 279.6 292.2 283 292.7 286.3C294.4 290 295.6 293.8 296.3 297.7C297.4 300.4 297.9 303.2 297.7 306.2C297.6 310.2 296.6 314 294.9 317.6C293.2 321 290.8 323.8 287.7 326.2C284.2 328.6 280.4 330.2 276.3 331.2C273 332.4 269.8 333.2 266.3 333.6C263.8 334.2 261.4 334.8 258.9 335.6C255.2 334.8 251.6 334.3 247.8 334C243.8 333.6 240 333 236.4 332C231.6 330.8 227.2 328.8 223.5 326.2C220.8 324.2 218.6 321.8 217.1 319C215.2 316 214.1 312.6 213.8 309C213.7 306 213.9 303.2 214.3 300.5C214.9 295.6 215.8 290.8 217.1 286.3C218.2 282.2 219.6 278.4 221.4 274.8C223.2 270.4 225.4 266 227.8 262C229.8 258.4 231.9 255 234.2 252C239.6 246 245.4 240.6 251 235.6z"/></clipPath>
<filter id="lbR" x="-10%" y="-10%" width="120%" height="120%"><feGaussianBlur stdDeviation="0.5"/></filter></defs>
<g filter="url(#lbR)">
<path d="M251 235.6C254.6 238.6 258.4 241.8 262 244.8C265.6 248 269 251.2 272 254.8C275.2 258 278 261.2 280.6 264.8C283.8 268.6 286.8 272.4 289.2 276.2C291 279.6 292.2 283 292.7 286.3C294.4 290 295.6 293.8 296.3 297.7C297.4 300.4 297.9 303.2 297.7 306.2C297.6 310.2 296.6 314 294.9 317.6C293.2 321 290.8 323.8 287.7 326.2C284.2 328.6 280.4 330.2 276.3 331.2C273 332.4 269.8 333.2 266.3 333.6C263.8 334.2 261.4 334.8 258.9 335.6C255.2 334.8 251.6 334.3 247.8 334C243.8 333.6 240 333 236.4 332C231.6 330.8 227.2 328.8 223.5 326.2C220.8 324.2 218.6 321.8 217.1 319C215.2 316 214.1 312.6 213.8 309C213.7 306 213.9 303.2 214.3 300.5C214.9 295.6 215.8 290.8 217.1 286.3C218.2 282.2 219.6 278.4 221.4 274.8C223.2 270.4 225.4 266 227.8 262C229.8 258.4 231.9 255 234.2 252C239.6 246 245.4 240.6 251 235.6z" fill="url(#lgR)" stroke="#55550c" stroke-width="0.8"/>
<g clip-path="url(#lcR)" fill="none">
<path d="M251.64 244q-14 -18 -46 -44 M251.64 242q13 -19 44 -48 M251.95 248q-14 -18 -46 -44 M251.95 246q13 -19 44 -48 M252.27 252q-14 -18 -46 -44 M252.27 250q13 -19 44 -48 M252.59 256q-14 -18 -46 -44 M252.59 254q13 -19 44 -48 M252.91 260q-14 -18 -46 -44 M252.91 258q13 -19 44 -48 M253.23 264q-14 -18 -46 -44 M253.23 262q13 -19 44 -48 M253.54 268q-14 -18 -46 -44 M253.54 266q13 -19 44 -48 M253.86 272q-14 -18 -46 -44 M253.86 270q13 -19 44 -48 M254.18 276q-14 -18 -46 -44 M254.18 274q13 -19 44 -48 M254.5 280q-14 -18 -46 -44 M254.5 278q13 -19 44 -48 M254.82 284q-14 -18 -46 -44 M254.82 282q13 -19 44 -48 M255.13 288q-14 -18 -46 -44 M255.13 286q13 -19 44 -48 M255.45 292q-14 -18 -46 -44 M255.45 290q13 -19 44 -48 M255.77 296q-14 -18 -46 -44 M255.77 294q13 -19 44 -48 M256.09 300q-14 -18 -46 -44 M256.09 298q13 -19 44 -48 M256.41 304q-14 -18 -46 -44 M256.41 302q13 -19 44 -48 M256.72 308q-14 -18 -46 -44 M256.72 306q13 -19 44 -48 M257.04 312q-14 -18 -46 -44 M257.04 310q13 -19 44 -48 M257.36 316q-14 -18 -46 -44 M257.36 314q13 -19 44 -48 M257.68 320q-14 -18 -46 -44 M257.68 318q13 -19 44 -48 M258 324q-14 -18 -46 -44 M258 322q13 -19 44 -48 M258.31 328q-14 -18 -46 -44 M258.31 326q13 -19 44 -48 M258.63 332q-14 -18 -46 -44 M258.63 330q13 -19 44 -48" stroke="#9a9a30" stroke-width="0.8" opacity="0.5"/>
<path d="M252.47 254.5q-14 -18 -46 -44 M253.38 266q-14 -18 -46 -44 M254.38 278.5q-14 -18 -46 -44 M255.45 292q-14 -18 -46 -44 M256.6 306.5q-14 -18 -46 -44 M257.84 322q-14 -18 -46 -44 M252.23 251.5q13 -19 44 -48 M253.15 263q13 -19 44 -48 M254.14 275.5q13 -19 44 -48 M255.21 289q13 -19 44 -48 M256.37 303.5q13 -19 44 -48 M257.6 319q13 -19 44 -48" stroke="#a0a034" stroke-width="2.2" opacity="0.28"/>
<path d="M252.03 249q-14 -18 -46 -44 M252.91 260q-14 -18 -46 -44 M253.86 272q-14 -18 -46 -44 M254.9 285q-14 -18 -46 -44 M256.01 299q-14 -18 -46 -44 M257.2 314q-14 -18 -46 -44 M251.79 246q13 -19 44 -48 M252.67 257q13 -19 44 -48 M253.62 269q13 -19 44 -48 M254.66 282q13 -19 44 -48 M255.77 296q13 -19 44 -48 M256.96 311q13 -19 44 -48 M258.9 334.6q-18 -22 -44 -46 M258.9 334.6q-22 -14 -48 -23 M258.9 334.6q-20 -5 -40 -7 M258.9 334.6q14 -24 36 -47 M258.9 334.6q20 -16 42 -29 M258.9 334.6q18 -7 36 -11" stroke="#2e2e05" stroke-width="1.15" opacity="0.52"/>
<path d="M251 235.6C252.4 262 255 300 258.9 335" stroke="#2c2c05" stroke-width="1.4" opacity="0.78"/>
<circle cx="258.9" cy="334.4" r="1.7" fill="#24240a"/>
</g>
<path d="M243.5 220.3C247 220.6 251 222.6 254.2 221.8C256.8 221.4 257.6 223.2 256.4 225.4C255 227.8 251.8 228.6 250.6 230.6C250 232 250.6 234 251 235.8" fill="none" stroke="#58580a" stroke-width="1.6" stroke-linecap="round"/>
</g></svg><span class="t" style="left:137.2px;top:205px;font-size:14.1px;line-height:26px;color:#141408;font-weight:bold;transform:scaleX(0.904);">Welcome!</span><div class="r" style="left:380px;top:80px;width:12.4px;height:400px;background:#4b4b4b;"></div><div class="r" style="left:381.6px;top:183.5px;width:9.8px;height:177.3px;background:#6c6c6c;"></div><svg class="i" style="left:384px;top:87px;" width="7" height="4" viewBox="0 0 7 4"><path d="M0.6 3.2L3.4 0.8L6.2 3.2" fill="none" stroke="#8c8c8c" stroke-width="1.1"/></svg><svg class="i" style="left:384px;top:453.6px;" width="7" height="4" viewBox="0 0 7 4"><path d="M0.6 0.8L3.4 3.2L6.2 0.8" fill="none" stroke="#8c8c8c" stroke-width="1.1"/></svg><div class="r" style="left:380px;top:463px;width:12.4px;height:13.6px;background:#545454;"></div><div class="r" style="left:44px;top:464px;width:336px;height:16px;background:#4b4b4b;"></div><div class="r" style="left:44px;top:464px;width:37px;height:16px;background:#444444;"></div><div class="r" style="left:81px;top:464px;width:142.6px;height:16px;background:#585858;"></div><div class="r" style="left:44px;top:464px;width:36.2px;height:10px;background:#1d8f86;background:linear-gradient(100deg,#167f7a 0%,#2fa398 30%,#1b8a83 45%,#3aa99c 60%,#1a8780 75%,#2c9c92 100%);"></div><span class="t" style="left:108.8px;top:462px;font-size:8.6px;line-height:16px;color:#e0e0e0;transform:scaleX(0.848);">300 px x 250 px (72 ppi)</span><svg class="i" style="left:215.6px;top:466px;" width="5" height="9" viewBox="0 0 5 9"><path d="M1 0.8L3.6 4.4L1 8" fill="none" stroke="#d8d8d8" stroke-width="1"/></svg><svg class="i" style="left:230.6px;top:467px;" width="4" height="7" viewBox="0 0 4 7"><path d="M3 0.8L1 3.4L3 6" fill="none" stroke="#747474" stroke-width="0.9"/></svg><svg class="i" style="left:370.4px;top:467px;" width="4" height="7" viewBox="0 0 4 7"><path d="M1 0.8L3 3.4L1 6" fill="none" stroke="#747474" stroke-width="0.9"/></svg><div class="r" style="left:272px;top:465.4px;width:61.8px;height:8.8px;background:#6c6c6c;"></div><div class="r" style="left:44px;top:476.6px;width:349px;height:14.4px;background:#3f3f3f;"></div><div class="r" style="left:392.4px;top:59px;width:2.9px;height:421px;background:#3f3f3f;"></div><div class="r" style="left:395.3px;top:59px;width:183.3px;height:30.6px;background:#424242;"></div><svg class="i" style="left:569px;top:60.4px;" width="6" height="6" viewBox="0 0 6 6"><path d="M0.5 0.8L2.1 2.4L0.5 4M2.7 0.8L4.3 2.4L2.7 4" fill="none" stroke="#f4f4f4" stroke-width="1.35"/></svg><div class="r" style="left:395.3px;top:67.8px;width:36.7px;height:21.8px;background:#535353;"></div><div class="r" style="left:432px;top:67.8px;width:1px;height:21.8px;background:#3a3a3a;"></div><div class="r" style="left:477px;top:67.8px;width:1px;height:21.8px;background:#3a3a3a;"></div><div class="r" style="left:512px;top:67.8px;width:1px;height:21.8px;background:#3a3a3a;"></div><span class="t" style="left:402px;top:70px;font-size:8.9px;line-height:16px;color:#f4f4f4;font-weight:bold;transform:scaleX(0.822);">Layers</span><span class="t" style="left:438.8px;top:70px;font-size:8.9px;line-height:16px;color:#c9c9c9;font-weight:bold;transform:scaleX(0.829);">Channels</span><span class="t" style="left:485.8px;top:70px;font-size:8.9px;line-height:16px;color:#c9c9c9;font-weight:bold;transform:scaleX(0.825);">Paths</span><svg class="i" style="left:568px;top:75.6px;" width="8" height="6" viewBox="0 0 8 6"><path d="M0.4 0.9H7M0.4 2.7H7M0.4 4.5H7" stroke="#8f8f8f" stroke-width="1"/></svg><div class="r" style="left:395.3px;top:89.6px;width:183.3px;height:387px;background:#535353;"></div><div class="r" style="left:578.6px;top:58.4px;width:21.4px;height:432.6px;background:#474747;"></div><div class="r" style="left:392.4px;top:476.6px;width:207.6px;height:14.4px;background:#3f3f3f;"></div><div class="r" style="left:398.3px;top:97.2px;width:65.9px;height:13.4px;background:#434343;border-radius:1.5px;"></div><svg class="i" style="left:403.4px;top:99.4px;" width="9" height="9" viewBox="0 0 9 9"><circle cx="3.6" cy="3.6" r="2.6" fill="none" stroke="#e8e8e8" stroke-width="1.1"/><path d="M5.6 5.6L8 8" stroke="#e8e8e8" stroke-width="1.3"/></svg><span class="t" style="left:414.8px;top:96px;font-size:8.6px;line-height:16px;color:#e2e2e2;transform:scaleX(0.860);">Kind</span><svg class="i" style="left:457.3px;top:103.2px;" width="5" height="3.6" viewBox="0 0 5 3.6"><path d="M0.4 0.5L2.5 3L4.6 0.5" fill="none" stroke="#bdbdbd" stroke-width="0.9"/></svg><svg class="i" style="left:474.6px;top:99px;" width="11" height="9" viewBox="0 0 11 9"><rect x="0.6" y="0.6" width="9.4" height="7.6" fill="none" stroke="#e4e4e4" stroke-width="1.1"/><path d="M2 6.6L3.8 3.8L5.2 5.6L6.6 4.4L8.6 6.6z" fill="#e4e4e4"/></svg><svg class="i" style="left:493.4px;top:99px;" width="10" height="9" viewBox="0 0 10 9"><circle cx="4.7" cy="4.5" r="3.7" fill="none" stroke="#e4e4e4" stroke-width="1.1"/><path d="M7.4 1.9A3.7 3.7 0 0 1 2 7.2z" fill="#e4e4e4"/></svg><span class="t ff-s" style="left:512.8px;top:96px;font-size:11.5px;line-height:16px;color:#e8e8e8;font-weight:bold;transform:scaleX(1.069);">T</span><svg class="i" style="left:530.6px;top:99px;" width="11" height="9.6" viewBox="0 0 11 9.6"><rect x="1.8" y="1.8" width="6.6" height="5.6" fill="none" stroke="#e4e4e4" stroke-width="1.1"/><g fill="#e4e4e4"><rect x="0.4" y="0.4" width="2.6" height="2.6"/><rect x="7.2" y="0.4" width="2.6" height="2.6"/><rect x="0.4" y="6.2" width="2.6" height="2.6"/><rect x="7.2" y="6.2" width="2.6" height="2.6"/></g></svg><svg class="i" style="left:550.2px;top:98.6px;" width="10" height="10" viewBox="0 0 10 10"><path d="M3 0.6H6.4L9 3.2V8.8H5.4" fill="none" stroke="#e4e4e4" stroke-width="1.1"/><path d="M6.2 0.8V3.4H8.8" fill="none" stroke="#e4e4e4" stroke-width="0.9"/><rect x="0.6" y="4.6" width="4.8" height="4.4" fill="#e4e4e4"/><path d="M1.6 4.6V3.4a1.4 1.4 0 0 1 2.8 0V4.6" fill="none" stroke="#e4e4e4" stroke-width="0.9"/></svg><div class="r" style="left:569px;top:98px;width:5.6px;height:11.6px;background:#3c3c3c;border-radius:3px;"></div><div class="r" style="left:568.4px;top:96.8px;width:6.8px;height:6.8px;background:#ececec;border-radius:50%;"></div><div class="r" style="left:395.3px;top:113.2px;width:183.3px;height:1px;background:#474747;"></div><div class="r" style="left:398.3px;top:119px;width:98.5px;height:13.6px;background:#4c4c4c;box-shadow:inset 0 0 0 0.7px #5a5a5a;border-radius:1.5px;"></div><span class="t" style="left:404px;top:118px;font-size:8.6px;line-height:16px;color:#858585;transform:scaleX(0.902);">Normal</span><svg class="i" style="left:489px;top:125px;" width="5" height="3.6" viewBox="0 0 5 3.6"><path d="M0.4 0.5L2.5 3L4.6 0.5" fill="none" stroke="#626262" stroke-width="0.9"/></svg><span class="t" style="left:504px;top:118px;font-size:8.6px;line-height:16px;color:#8a8a8a;transform:scaleX(0.881);">Opacity:</span><div class="r" style="left:536px;top:120px;width:26px;height:9.6px;background:#454545;"></div><span class="t" style="left:540px;top:117px;font-size:8.4px;line-height:16px;color:#707070;transform:scaleX(0.866);">100%</span><div class="r" style="left:564.2px;top:120px;width:9.8px;height:9.6px;background:#4c4c4c;box-shadow:inset 0 0 0 0.7px #5a5a5a;"></div><svg class="i" style="left:566.6px;top:124px;" width="5" height="3.6" viewBox="0 0 5 3.6"><path d="M0.4 0.5L2.5 3L4.6 0.5" fill="none" stroke="#626262" stroke-width="0.9"/></svg><div class="r" style="left:395.3px;top:134.8px;width:183.3px;height:1px;background:#474747;"></div><span class="t" style="left:400.2px;top:139px;font-size:8.6px;line-height:16px;color:#8a8a8a;transform:scaleX(0.837);">Lock:</span><svg class="i" style="left:425px;top:142.6px;" width="9.4" height="9.4" viewBox="0 0 9.4 9.4"><rect x="0.4" y="0.4" width="8.4" height="8.4" fill="none" stroke="#c2c2c2" stroke-width="0.8"/><g fill="#c2c2c2"><rect x="0.4" y="0.4" width="2.8" height="2.8"/><rect x="6" y="0.4" width="2.8" height="2.8"/><rect x="3.2" y="3.2" width="2.8" height="2.8"/><rect x="0.4" y="6" width="2.8" height="2.8"/><rect x="6" y="6" width="2.8" height="2.8"/></g></svg><svg class="i" style="left:441.6px;top:141.6px;" width="11" height="11.4" viewBox="0 0 11 11.4"><g transform="translate(5.6 5.8) scale(0.68)"><path d="M6.6-7L7.4-6.2L0.2 3.2L-1.8 1.4z" fill="#c2c2c2"/><path d="M-2.6 2.2L-0.6 4.1C-1.4 6.6-4 7.4-6.8 7C-5.2 5.8-5.4 3-2.6 2.2z" fill="#c2c2c2"/></g></svg><svg class="i" style="left:458px;top:142px;" width="11" height="11" viewBox="0 0 11 11"><g transform="translate(5.5 5.5) scale(0.74)"><g fill="none" stroke="#c2c2c2" stroke-width="1.25"><path d="M0-4.2V4.2M-4.2 0H4.2"/></g><g fill="#c2c2c2"><path d="M0-6.6L2.3-3.7H-2.3z"/><path d="M0 6.6L2.3 3.7H-2.3z"/><path d="M-6.6 0L-3.7-2.3V2.3z"/><path d="M6.6 0L3.7-2.3V2.3z"/></g></g></svg><svg class="i" style="left:475px;top:142.4px;" width="11.4" height="10.4" viewBox="0 0 11.4 10.4"><g fill="none" stroke="#c2c2c2" stroke-width="1"><path d="M1.6 0.4V9.2M0.2 1.5H6.8L10 4.4V9.2M0.2 7.5H10.9"/><path d="M6.6 1.6V4.6H9.8" stroke-width="0.8"/></g></svg><svg class="i" style="left:494px;top:141.4px;" width="9.4" height="10.6" viewBox="0 0 9.4 10.6"><rect x="0.6" y="4.4" width="8" height="5.8" fill="#c2c2c2"/><path d="M2.4 4.4V3a2.2 2.2 0 0 1 4.4 0V4.4" fill="none" stroke="#c2c2c2" stroke-width="1.2"/><rect x="4" y="6.2" width="1.3" height="2" fill="#535353"/></svg><span class="t" style="left:520.4px;top:139px;font-size:8.6px;line-height:16px;color:#8a8a8a;transform:scaleX(0.882);">Fill:</span><div class="r" style="left:536px;top:142.3px;width:26px;height:9.5px;background:#454545;"></div><span class="t" style="left:540px;top:139px;font-size:8.4px;line-height:16px;color:#707070;transform:scaleX(0.866);">100%</span><div class="r" style="left:564.2px;top:142.3px;width:9.8px;height:9.5px;background:#4c4c4c;box-shadow:inset 0 0 0 0.7px #5a5a5a;"></div><svg class="i" style="left:566.6px;top:146.2px;" width="5" height="3.6" viewBox="0 0 5 3.6"><path d="M0.4 0.5L2.5 3L4.6 0.5" fill="none" stroke="#626262" stroke-width="0.9"/></svg><div class="r" style="left:395.3px;top:159.8px;width:183.3px;height:297.8px;background:#4c4c4c;"></div><div class="r" style="left:566.6px;top:159.8px;width:12px;height:297.8px;background:#4a4a4a;"></div><div class="r" style="left:395.3px;top:160px;width:171.3px;height:28.6px;background:#535353;"></div><div class="r" style="left:395.3px;top:188.6px;width:171.3px;height:1px;background:#454545;"></div><div class="r" style="left:417.6px;top:160px;width:0.8px;height:28.6px;background:#4c4c4c;"></div><svg class="i" style="left:401px;top:171.9px;" width="10.4" height="7.2" viewBox="0 0 10.4 7.2"><path d="M0.4 3.6C2.4 0.2 8 0.2 10 3.6C8 7 2.4 7 0.4 3.6z" fill="#ececec"/><circle cx="5.2" cy="3.6" r="1.9" fill="#4a4a4a"/><circle cx="5.2" cy="3.6" r="0.8" fill="#ececec"/></svg><span class="t ff-s" style="left:427.8px;top:164px;font-size:15.5px;line-height:26px;color:#ececec;transform:scaleX(1.162);">T</span><span class="t" style="left:454.2px;top:167px;font-size:8.7px;line-height:16px;color:#e6e6e6;transform:scaleX(0.914);">Welcome!</span><div class="r" style="left:395.3px;top:189.6px;width:171.3px;height:28.2px;background:#535353;"></div><div class="r" style="left:395.3px;top:217.8px;width:171.3px;height:1px;background:#454545;"></div><div class="r" style="left:417.6px;top:189.6px;width:0.8px;height:28.2px;background:#4c4c4c;"></div><svg class="i" style="left:401px;top:201.8px;" width="10.4" height="7.2" viewBox="0 0 10.4 7.2"><path d="M0.4 3.6C2.4 0.2 8 0.2 10 3.6C8 7 2.4 7 0.4 3.6z" fill="#ececec"/><circle cx="5.2" cy="3.6" r="1.9" fill="#4a4a4a"/><circle cx="5.2" cy="3.6" r="0.8" fill="#ececec"/></svg><div class="r" style="left:421.3px;top:194.8px;width:24.7px;height:21px;background:#2e2e2e;"></div><div class="r" style="left:422.1px;top:195.6px;width:23.1px;height:19.4px;background:#fff;background-color:#fff;background-image:linear-gradient(45deg,#ccc 25%,transparent 25%,transparent 75%,#ccc 75%),linear-gradient(45deg,#ccc 25%,transparent 25%,transparent 75%,#ccc 75%);background-size:5px 5px;background-position:0 0,2.5px 2.5px;"></div><svg class="i" style="left:433.6px;top:199.4px;" width="10" height="13" viewBox="0 0 10 13"><path d="M4.8 0.6C7.4 3.4 9.6 6.6 9.4 9.4C8.4 11.6 6.6 12 5.2 12.4C3.6 12 1.4 11.6 0.6 9.4C0.6 6.6 2.4 3.4 4.8 0.6z" fill="#8d8d8d" opacity="0.85"/></svg><span class="t" style="left:454.2px;top:197px;font-size:8.7px;line-height:16px;color:#e6e6e6;transform:scaleX(0.875);">Layer 2</span><div class="r" style="left:395.3px;top:218.8px;width:171.3px;height:26.2px;background:#535353;"></div><div class="r" style="left:395.3px;top:245px;width:171.3px;height:1px;background:#454545;"></div><div class="r" style="left:417.6px;top:218.8px;width:0.8px;height:26.2px;background:#4c4c4c;"></div><svg class="i" style="left:401px;top:229.7px;" width="10.4" height="7.2" viewBox="0 0 10.4 7.2"><path d="M0.4 3.6C2.4 0.2 8 0.2 10 3.6C8 7 2.4 7 0.4 3.6z" fill="#ececec"/><circle cx="5.2" cy="3.6" r="1.9" fill="#4a4a4a"/><circle cx="5.2" cy="3.6" r="0.8" fill="#ececec"/></svg><div class="r" style="left:421.3px;top:222.7px;width:24.7px;height:21px;background:#2e2e2e;"></div><div class="r" style="left:422.1px;top:223.5px;width:23.1px;height:19.4px;background:#fdfd02;"></div><span class="t" style="left:454.2px;top:225px;font-size:8.7px;line-height:16px;color:#e6e6e6;transform:scaleX(0.855);">Layer 1</span><div class="r" style="left:395.3px;top:457.6px;width:183.3px;height:19px;background:#515151;"></div><div class="r" style="left:395.3px;top:457.2px;width:183.3px;height:0.8px;background:#464646;"></div><svg class="i" style="left:419px;top:463.9px;" width="13" height="6.8" viewBox="0 0 13 6.8"><g fill="none" stroke="#8e8e8e" stroke-width="1.2"><rect x="0.8" y="0.8" width="6.2" height="4.8" rx="2.4"/><rect x="5.6" y="0.8" width="6.2" height="4.8" rx="2.4"/></g></svg><span class="t" style="left:442.2px;top:460px;font-size:11px;line-height:16px;color:#8e8e8e;font-style:italic;transform:scaleX(1.099);">fx</span><svg class="i" style="left:462.4px;top:463.3px;" width="11" height="8" viewBox="0 0 11 8"><rect x="0.2" y="0.4" width="10.4" height="7.2" fill="#cfcfcf"/><circle cx="5.4" cy="4" r="2.5" fill="#535353"/></svg><svg class="i" style="left:483.8px;top:462.3px;" width="11.6" height="11.6" viewBox="0 0 11.6 11.6"><circle cx="4.9" cy="4.9" r="4.1" fill="none" stroke="#e6e6e6" stroke-width="1.1"/><path d="M7.9 2A4.1 4.1 0 0 1 2 7.9z" fill="#e6e6e6"/><path d="M11.4 8.6v2.6h-2.6z" fill="#e6e6e6"/></svg><svg class="i" style="left:504.4px;top:462.9px;" width="11" height="9" viewBox="0 0 11 9"><path d="M0.3 0.6H4L5 1.9H10.4V8.4H0.3z" fill="#e6e6e6"/></svg><svg class="i" style="left:526px;top:462.5px;" width="10" height="10" viewBox="0 0 10 10"><rect x="0.7" y="0.7" width="8.4" height="8.4" rx="0.8" fill="none" stroke="#e6e6e6" stroke-width="1.2"/><path d="M4.9 3V6.8M3 4.9H6.8" stroke="#e6e6e6" stroke-width="1.2"/></svg><svg class="i" style="left:547.2px;top:462.3px;" width="9.6" height="10.4" viewBox="0 0 9.6 10.4"><path d="M1.4 3H8.2V9.8H1.4z" fill="#8e8e8e"/><rect x="0.4" y="1.4" width="8.8" height="1.1" fill="#8e8e8e"/><rect x="3.2" y="0.2" width="3.2" height="1.4" fill="#8e8e8e"/></svg>
<div class="r" style="left:8px;top:478.8px;width:592px;height:12.2px;background:#3a3a3a;background:linear-gradient(90deg,#3a3a3a 0,#3a3a3a 30px,#2d6d6c 60px,#2d6d6c 150px,#3a3f3f 200px,#3a3a3a 100%);"></div>
</div></div>
</body></html>
